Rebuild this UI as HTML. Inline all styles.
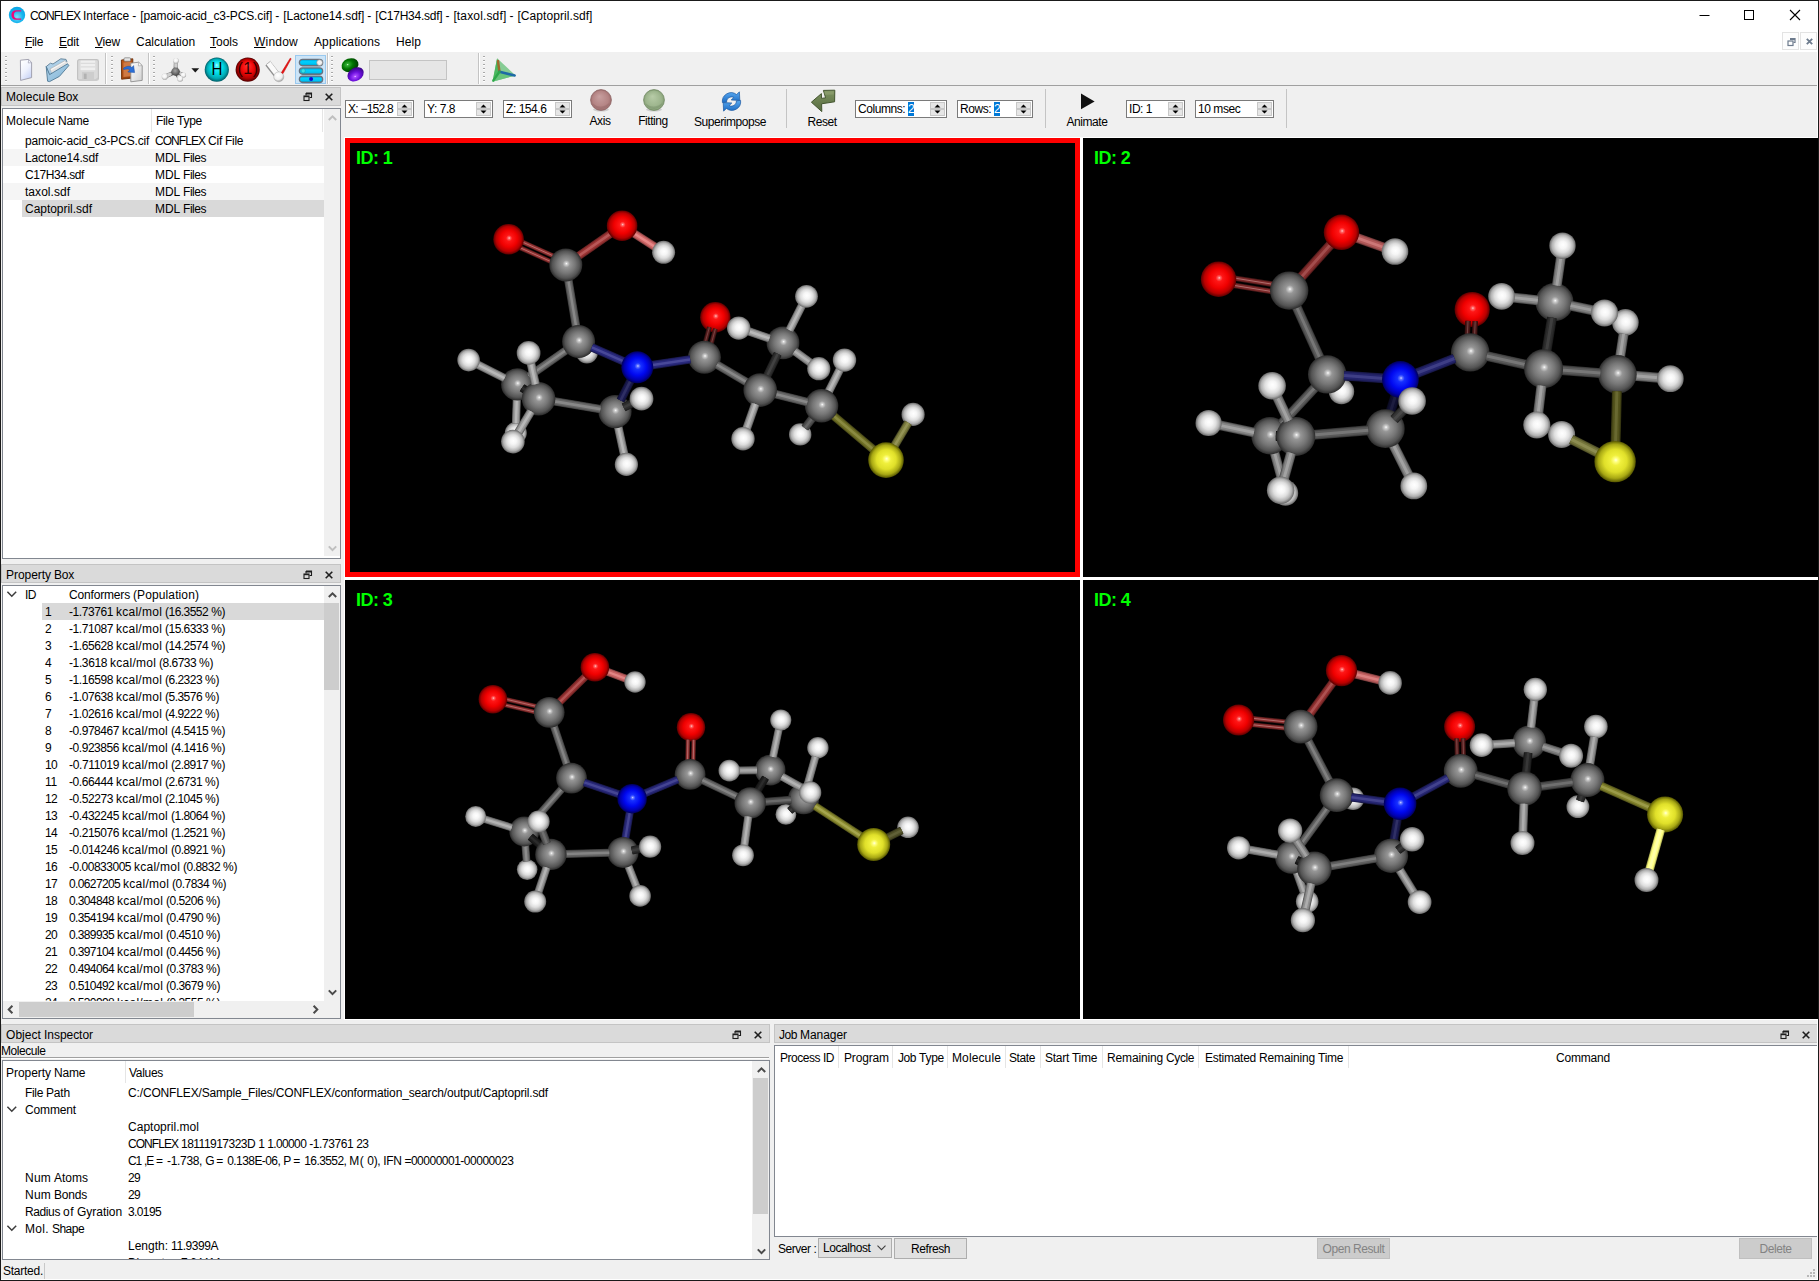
<!DOCTYPE html><html><head><meta charset="utf-8"><title>CONFLEX Interface</title><style>html,body{margin:0;padding:0;}
body{width:1819px;height:1281px;overflow:hidden;background:#000;font-family:"Liberation Sans",sans-serif;font-size:12px;color:#000;}
#win{position:absolute;left:0;top:0;width:1819px;height:1281px;background:#f0f0f0;overflow:hidden;}
i{position:absolute;display:block;}
.t{position:absolute;white-space:nowrap;font-size:12px;line-height:14px;color:#000;}
.g{position:absolute;white-space:nowrap;font-size:12px;line-height:14px;color:#000;letter-spacing:-0.45px;}
.c{text-align:center;}
#title{position:absolute;left:1px;top:1px;width:1817px;height:30px;background:#fff;}
#title .t{font-size:12px;}
#menu{position:absolute;left:1px;top:31px;width:1817px;height:21px;background:#fff;}
.mi{top:35px;}
.mi u{text-decoration:underline;text-underline-offset:1px;}
#tb{position:absolute;left:1px;top:52px;width:1817px;height:33px;background:#f0f0f0;border-bottom:1px solid #a0a0a0;}
.grip{top:56px;width:2px;height:27px;background:repeating-linear-gradient(to bottom,#a8a8a8 0,#a8a8a8 1px,#ffffff 1px,#ffffff 2px,transparent 2px,transparent 4px);}
.tsep{top:53px;width:1px;height:31px;background:#c4c4c4;border-right:1px solid #fff;}
.dtitle{position:absolute;background:#dadada;border:1px solid #c4c4c4;box-sizing:border-box;}
.tree{position:absolute;background:#fff;border:1px solid #828790;overflow:hidden;}
.hdr{position:absolute;background:#fff;}
.hsep{top:0;width:1px;height:23px;background:#e5e5e5;}
.alt{background:#f5f5f5;}
.sel{background:#d9d9d9;}
.vsb,.hsb{position:absolute;background:#f0f0f0;}
.thumb{background:#cdcdcd;}
.spin{position:absolute;background:#fff;border:1px solid #7a7a7a;box-sizing:border-box;}
.hl{background:#0078d7;color:#fff;font-weight:normal;}
.vsep{width:1px;background:#c4c4c4;}
.hline{height:1px;background:#a0a0a0;border-bottom:1px solid #fff;}
.mdiline{width:2px;background:#828790;}
#mdi{position:absolute;left:344px;top:137px;width:1475px;height:883px;background:#fff;}
.vp{position:absolute;background:#000;overflow:hidden;}
.vp svg{position:absolute;left:0;top:0;}
.vid{position:absolute;color:#00ff00;font-weight:bold;font-size:18px;line-height:18px;white-space:nowrap;letter-spacing:-0.55px;}
.combo{position:absolute;background:#e1e1e1;border:1px solid #adadad;box-sizing:border-box;}
.btn{position:absolute;background:#e1e1e1;border:1px solid #adadad;box-sizing:border-box;}
.btn.dis{background:#cccccc;border-color:#bfbfbf;}
.btn.dis .g{color:#838383;}
svg.ic{position:absolute;overflow:visible;}
.wb{background:#1a1a1a;}
</style></head><body><div id="win"><div id="title"></div><svg class="ic" style="left:8px;top:6px" width="18" height="18" viewBox="0 0 18 18"><defs><radialGradient id="lg" cx="0.5" cy="0.62" r="0.6"><stop offset="0" stop-color="#7fdcf7"/><stop offset="0.6" stop-color="#16b4ee"/><stop offset="1" stop-color="#0aa4e4"/></radialGradient></defs><circle cx="9" cy="9" r="8.2" fill="url(#lg)"/><path d="M13.2 4.2 H8.2 C5.2 4.2 3.4 6.2 3.4 9 C3.4 11.8 5.2 13.8 8.2 13.8 H13.2 V12.6 H9 C7 12.6 5.9 11.2 5.9 9 C5.9 6.8 7 5.4 9 5.4 H13.2 Z" fill="#f0067a"/></svg><span class="t" style="left:30px;top:9px"><span style="letter-spacing:-0.95px">CONFLEX</span><span style="letter-spacing:-0.33px"> </span><span style="letter-spacing:-0.07px">Interface</span><span style="letter-spacing:-0.33px"> </span><span style="letter-spacing:1.00px">-</span><span style="letter-spacing:-0.33px"> </span><span style="letter-spacing:-0.11px">[pamoic-acid_c3-PCS.cif]</span><span style="letter-spacing:-0.33px"> </span><span style="letter-spacing:1.00px">-</span><span style="letter-spacing:-0.33px"> </span><span style="letter-spacing:-0.07px">[Lactone14.sdf]</span><span style="letter-spacing:-0.33px"> </span><span style="letter-spacing:1.00px">-</span><span style="letter-spacing:-0.33px"> </span><span style="letter-spacing:-0.25px">[C17H34.sdf]</span><span style="letter-spacing:-0.33px"> </span><span style="letter-spacing:1.00px">-</span><span style="letter-spacing:-0.33px"> </span><span style="letter-spacing:0.15px">[taxol.sdf]</span><span style="letter-spacing:-0.33px"> </span><span style="letter-spacing:1.00px">-</span><span style="letter-spacing:-0.33px"> </span><span style="letter-spacing:0.07px">[Captopril.sdf]</span></span><svg class="ic" style="left:1690px;top:5px" width="120" height="22" viewBox="0 0 120 22"><path d="M9.5 10.5 H19.5" stroke="#000" stroke-width="1" fill="none"/><rect x="54.5" y="5.5" width="9" height="9" stroke="#000" stroke-width="1" fill="none"/><path d="M100 5 L110 15 M110 5 L100 15" stroke="#000" stroke-width="1.1" fill="none"/></svg><div id="menu"></div><span class="t mi" style="left:25px;letter-spacing:-0.34px"><u>F</u>ile</span><span class="t mi" style="left:59px;letter-spacing:-0.17px"><u>E</u>dit</span><span class="t mi" style="left:95px;letter-spacing:-0.20px"><u>V</u>iew</span><span class="t mi" style="left:136px;letter-spacing:-0.03px"><u></u>Calculation</span><span class="t mi" style="left:210px;letter-spacing:-0.00px"><u>T</u>ools</span><span class="t mi" style="left:254px;letter-spacing:0.22px"><u>W</u>indow</span><span class="t mi" style="left:314px;letter-spacing:0.11px"><u></u>Applications</span><span class="t mi" style="left:396px;letter-spacing:0.08px"><u></u>Help</span><i style="left:1782px;top:32px;width:17px;height:18px;border:1px solid #e3e3e3;box-sizing:border-box;background:#fdfdfd"></i><i style="left:1800px;top:32px;width:17px;height:18px;border:1px solid #e3e3e3;box-sizing:border-box;background:#fdfdfd"></i><svg class="ic" style="left:1786.5px;top:37px" width="10" height="10" viewBox="0 0 10 10"><path d="M3 1.5 H8 V5.5 H6.5 M3 2.5 H8" stroke="#6d7b8d" stroke-width="1.2" fill="none"/><rect x="1" y="4" width="5" height="4.5" stroke="#6d7b8d" stroke-width="1.2" fill="none"/></svg><svg class="ic" style="left:1805.5px;top:37.5px" width="8" height="8" viewBox="0 0 8 8"><path d="M0.8 0.8 L6.2 6.2 M6.2 0.8 L0.8 6.2" stroke="#6d7b8d" stroke-width="1.8" fill="none"/></svg><div id="tb"></div><i class="grip" style="left:5px"></i><i class="grip" style="left:111px"></i><i class="grip" style="left:153px"></i><i class="grip" style="left:331px"></i><i class="grip" style="left:483px"></i><i class="tsep" style="left:105px"></i><i class="tsep" style="left:148px"></i><i class="tsep" style="left:327px"></i><i class="tsep" style="left:478px"></i><svg class="ic" style="left:19px;top:58px" width="15" height="24" viewBox="0 0 15 24"><defs><linearGradient id="gnew" x1="0.2" y1="0" x2="0.8" y2="1"><stop offset="0" stop-color="#ffffff"/><stop offset="0.5" stop-color="#eef1fd"/><stop offset="1" stop-color="#c4d0f6"/></linearGradient></defs><path d="M1.4 2.2 L9.6 1.4 L12.6 4.6 L12.6 19.6 L1.6 22.4 Z" fill="url(#gnew)" stroke="#9a9aa8" stroke-width="0.9" stroke-linejoin="round"/><path d="M9.6 1.4 L9.3 5 L12.6 4.6 Z" fill="#f4f6ff" stroke="#a4a4b4" stroke-width="0.7" stroke-linejoin="round"/></svg><svg class="ic" style="left:45px;top:57px" width="25" height="26" viewBox="0 0 25 26"><defs><linearGradient id="gop" x1="0" y1="0" x2="1" y2="1"><stop offset="0" stop-color="#b4d6ec"/><stop offset="1" stop-color="#7fb2d4"/></linearGradient><linearGradient id="gop2" x1="0" y1="0" x2="1" y2="1"><stop offset="0" stop-color="#bcd9ee"/><stop offset="1" stop-color="#94bfdc"/></linearGradient></defs><path d="M1.2 9.6 L5.4 6.2 L8 7 L15.8 1.8 L21 2.4 L22 5 L4.4 18.4 Z" fill="url(#gop2)" stroke="#5f7f96" stroke-width="0.9" stroke-linejoin="round"/><path d="M5 12 L20 3.6 L22.4 6.4 L7.6 17.2 Z" fill="#f6f6f6" stroke="#a8a8a8" stroke-width="0.6" stroke-linejoin="round"/><path d="M6 13.4 L21.2 4.8 L22.8 6.8 L8 17.6 Z" fill="#e2e2e2"/><path d="M2.6 24.2 L1.2 9.6 L4.6 17.6 L22.6 6.8 L23.8 8.6 L14.4 19.4 L4.6 24.6 Z" fill="url(#gop)" stroke="#4f7894" stroke-width="0.9" stroke-linejoin="round"/></svg><svg class="ic" style="left:77px;top:59px" width="22" height="22" viewBox="0 0 22 22"><rect x="0.6" y="0.6" width="20.8" height="20.6" rx="1.8" fill="#dadada" stroke="#c2c2c2" stroke-width="1.2"/><rect x="3.6" y="1.6" width="14.6" height="9.6" fill="#efefef"/><path d="M3.6 4.4 H18.2 M3.6 7.8 H18.2" stroke="#dcdcdc" stroke-width="1.2"/><rect x="5" y="13" width="12" height="8" fill="#cdcdcd"/><rect x="6.8" y="14.6" width="2.8" height="5.4" fill="#b2b2b2"/><path d="M19 20.6 L21 18.6" stroke="#c2c2c2" stroke-width="1"/></svg><svg class="ic" style="left:120px;top:57px" width="24" height="26" viewBox="0 0 24 26"><defs><linearGradient id="gpa" x1="0" y1="0" x2="1" y2="1"><stop offset="0" stop-color="#c25a18"/><stop offset="1" stop-color="#8a3a0c"/></linearGradient><linearGradient id="gpb" x1="0" y1="0" x2="1" y2="1"><stop offset="0" stop-color="#ffffff"/><stop offset="1" stop-color="#d0d0d0"/></linearGradient></defs><path d="M1.4 3 L12.8 1.8 L13 21 L1.6 22.2 Z" fill="url(#gpa)" stroke="#6e3008" stroke-width="0.9" stroke-linejoin="round"/><path d="M3.4 5.6 L11.4 4.8 L11.4 19.2 L3.4 20 Z" fill="#cf7a44"/><rect x="4" y="0.8" width="6.6" height="3.4" rx="1" fill="#e4e4e4" stroke="#7a7a7a" stroke-width="0.7"/><path d="M10.8 6.2 L18.6 5.2 L22.2 8.6 L22.2 23.4 L10.8 24.8 Z" fill="url(#gpb)" stroke="#8e8e8e" stroke-width="0.9" stroke-linejoin="round"/><path d="M18.6 5.2 L18.4 8.9 L22.2 8.6 Z" fill="#fafafa" stroke="#9a9a9a" stroke-width="0.6" stroke-linejoin="round"/><path d="M3.6 11 C7.4 8.6 10.6 9 11.8 10.6 L13.6 8.6 L14.6 15.6 L7.8 15 L9.8 13 C8.8 11.8 6.8 11.6 3.6 12.6 Z" fill="#2b6fd6" stroke="#1a4ea6" stroke-width="0.5" stroke-linejoin="round"/></svg><svg class="ic" style="left:160px;top:56px" width="28" height="28" viewBox="0 0 28 28"><defs><radialGradient id="gmh" cx="0.45" cy="0.4" r="0.6"><stop offset="0" stop-color="#ffffff"/><stop offset="0.55" stop-color="#f0f0f0"/><stop offset="1" stop-color="#a4a4a4"/></radialGradient><radialGradient id="gmc" cx="0.45" cy="0.4" r="0.65"><stop offset="0" stop-color="#a4a4a4"/><stop offset="0.6" stop-color="#6a6a6a"/><stop offset="1" stop-color="#3a3a3a"/></radialGradient></defs><g stroke-linecap="round" fill="none"><path d="M15.6 15.8 L16 5" stroke="#6e6e6e" stroke-width="4.2"/><path d="M15.9 10.6 L16 5" stroke="#cfcfcf" stroke-width="3.4"/><path d="M15.6 15.8 L5 20.6" stroke="#6e6e6e" stroke-width="4.2"/><path d="M10 18.3 L5 20.6" stroke="#cfcfcf" stroke-width="3.4"/><path d="M15.6 15.8 L23.4 19" stroke="#6e6e6e" stroke-width="4"/><path d="M20.2 17.7 L23.4 19" stroke="#cfcfcf" stroke-width="3.2"/><path d="M15.6 15.8 L20 22.6" stroke="#606060" stroke-width="4.2"/><path d="M18.6 20.4 L20 22.6" stroke="#cfcfcf" stroke-width="3.4"/></g><circle cx="16" cy="4.8" r="2.8" fill="url(#gmh)"/><circle cx="4.8" cy="20.7" r="3.1" fill="url(#gmh)"/><circle cx="23.4" cy="19.1" r="2.7" fill="url(#gmh)"/><circle cx="15.6" cy="15.6" r="4.2" fill="url(#gmc)"/><circle cx="20.1" cy="22.8" r="3" fill="url(#gmh)"/></svg><svg class="ic" style="left:191px;top:68px" width="9" height="5" viewBox="0 0 9 5"><path d="M0.4 0.2 H8.2 L4.3 4.4 Z" fill="#1a1a1a"/></svg><svg class="ic" style="left:204px;top:57px" width="26" height="26" viewBox="0 0 26 26"><defs><radialGradient id="gh" cx="0.5" cy="0.5" r="0.5" fx="0.5" fy="0.3"><stop offset="0" stop-color="#b8ffff"/><stop offset="0.12" stop-color="#40f4fc"/><stop offset="0.5" stop-color="#00dce6"/><stop offset="0.8" stop-color="#00aab4"/><stop offset="1" stop-color="#005c66"/></radialGradient></defs><circle cx="12.8" cy="12.7" r="12.1" fill="url(#gh)"/><text x="15" y="18.2" text-anchor="middle" font-family="Liberation Sans,sans-serif" font-size="17.6" transform="scale(0.86,1)" fill="#000">H</text></svg><svg class="ic" style="left:235px;top:57px" width="26" height="26" viewBox="0 0 26 26"><defs><radialGradient id="g1" cx="0.5" cy="0.5" r="0.5" fx="0.5" fy="0.3"><stop offset="0" stop-color="#ff9090"/><stop offset="0.12" stop-color="#ff2a2a"/><stop offset="0.5" stop-color="#f00808"/><stop offset="0.8" stop-color="#b00000"/><stop offset="1" stop-color="#500000"/></radialGradient></defs><circle cx="12.7" cy="12.7" r="12.1" fill="url(#g1)"/><text x="13" y="17.4" text-anchor="middle" font-family="Liberation Sans,sans-serif" font-size="16" letter-spacing="0.4" fill="#300000">(1)</text></svg><svg class="ic" style="left:264px;top:56px" width="30" height="28" viewBox="0 0 30 28"><defs><linearGradient id="gck" x1="0" y1="0" x2="0.6" y2="1"><stop offset="0" stop-color="#ffffff"/><stop offset="0.65" stop-color="#f4f4f4"/><stop offset="1" stop-color="#9c9c9c"/></linearGradient><radialGradient id="gckb" cx="0.42" cy="0.35" r="0.7"><stop offset="0" stop-color="#ffffff"/><stop offset="0.6" stop-color="#f0f0f0"/><stop offset="1" stop-color="#8c8c8c"/></radialGradient></defs><path d="M4 7.4 L13.4 19.6" stroke="#8e8e8e" stroke-width="6.6" stroke-linecap="butt" fill="none"/><path d="M4.4 7 L13.8 19.2" stroke="#fafafa" stroke-width="5" stroke-linecap="butt" fill="none"/><path d="M2.2 8.6 L6.4 5.2" stroke="#b4b4b4" stroke-width="1" fill="none"/><circle cx="14.8" cy="20.8" r="5" fill="url(#gckb)" stroke="#a8a8a8" stroke-width="0.5"/><path d="M17.4 16.6 L26.2 2.2 L27.2 2.8 L19 17.6 Z" fill="#e81414" stroke="#c00000" stroke-width="0.5" stroke-linejoin="round"/></svg><i style="left:295px;top:55px;width:31px;height:29px;background:#cce4f7;border:1px solid #99c9ef;box-sizing:border-box"></i><svg class="ic" style="left:298px;top:58px" width="26" height="26" viewBox="0 0 26 26"><defs><linearGradient id="gly" x1="0" y1="0" x2="0" y2="1"><stop offset="0" stop-color="#0098d0"/><stop offset="0.35" stop-color="#00d0ff"/><stop offset="0.7" stop-color="#00c4f4"/><stop offset="1" stop-color="#0090c4"/></linearGradient></defs><rect x="1.4" y="1.4" width="23.2" height="6.4" rx="3.2" fill="url(#gly)" stroke="#68727e" stroke-width="1.4"/><rect x="1.4" y="9.9" width="23.2" height="6.4" rx="3.2" fill="url(#gly)" stroke="#68727e" stroke-width="1.4"/><rect x="1.4" y="18.1" width="23.2" height="6.4" rx="3.2" fill="url(#gly)" stroke="#68727e" stroke-width="1.4"/><circle cx="21.6" cy="4.6" r="2.9" fill="#f2f2f2" stroke="#909090" stroke-width="0.7"/><circle cx="5.2" cy="12.9" r="2.1" fill="#38e0e8" stroke="#1a98a0" stroke-width="0.5"/><circle cx="13.1" cy="21.1" r="2" fill="#0c0cd8"/></svg><svg class="ic" style="left:339px;top:56px" width="28" height="28" viewBox="0 0 28 28"><defs><radialGradient id="gog" cx="0.38" cy="0.4" r="0.7"><stop offset="0" stop-color="#d8ffd8"/><stop offset="0.1" stop-color="#30b030"/><stop offset="0.45" stop-color="#007400"/><stop offset="1" stop-color="#003000"/></radialGradient><radialGradient id="gov" cx="0.42" cy="0.62" r="0.7"><stop offset="0" stop-color="#f0d8ff"/><stop offset="0.1" stop-color="#a848ff"/><stop offset="0.45" stop-color="#6c10dc"/><stop offset="1" stop-color="#2c0070"/></radialGradient></defs><ellipse cx="11" cy="9.2" rx="8.7" ry="6.8" transform="rotate(-20 11 9.2)" fill="url(#gog)"/><ellipse cx="16.6" cy="18.4" rx="8.7" ry="6.5" transform="rotate(-30 16.6 18.4)" fill="url(#gov)"/></svg><i style="left:369px;top:60px;width:78px;height:20px;background:#e6e6e6;border:1px solid #c4c4c4;box-sizing:border-box"></i><svg class="ic" style="left:490px;top:56px" width="28" height="28" viewBox="0 0 28 28"><path d="M7.1 2.3 L25.6 19.5 L2.5 25.7 Z" fill="#86cc94"/><path d="M7.1 2.3 L9.5 15.8 L2.5 25.7 Z" fill="#4cb860"/><path d="M9.5 15.8 L25.6 19.5 L2.5 25.7 Z" fill="#68c47c"/><path d="M8 5 L9.5 15.8" stroke="#a06a2c" stroke-width="2.4" fill="none" stroke-linecap="round"/><path d="M9.5 15.8 L24.6 19.4" stroke="#1e6aa6" stroke-width="2.6" fill="none" stroke-linecap="round"/><path d="M9.5 15.8 L3.4 24.4" stroke="#2fa84a" stroke-width="2.4" fill="none" stroke-linecap="round"/></svg><div class="dtitle" style="left:1px;top:87px;width:340px;height:19px"><span class="t" style="left:4px;top:2px"><span style="letter-spacing:0.12px">Molecule</span><span style="letter-spacing:-0.33px"> </span><span style="letter-spacing:-0.22px">Box</span></span><svg class="ic" style="right:27px;top:4px" width="10" height="10" viewBox="0 0 10 10"><path d="M3 1 H8.5 V5.5 H6.5 M3 2 H8.5 M3 1 V3.5" stroke="#1e1e1e" stroke-width="1.1" fill="none"/><rect x="1" y="4" width="5" height="4.5" stroke="#1e1e1e" stroke-width="1.1" fill="none"/><path d="M1 4.6 H6" stroke="#1e1e1e" stroke-width="1.2"/></svg><svg class="ic" style="right:7px;top:5px" width="8" height="8" viewBox="0 0 8 8"><path d="M0.7 0.7 L7.3 7.3 M7.3 0.7 L0.7 7.3" stroke="#1e1e1e" stroke-width="1.6" fill="none"/></svg></div><div class="tree" style="left:2px;top:108px;width:337px;height:449px"><div class="hdr" style="left:0;top:0;width:320px;height:23px"><span class="t" style="left:3px;top:5px"><span style="letter-spacing:0.12px">Molecule</span><span style="letter-spacing:-0.33px"> </span><span style="letter-spacing:-0.25px">Name</span></span><i class="hsep" style="left:148px"></i><span class="t" style="left:153px;top:5px"><span style="letter-spacing:-0.34px">File</span><span style="letter-spacing:-0.33px"> </span><span style="letter-spacing:-0.25px">Type</span></span><i class="hsep" style="left:319px"></i></div><span class="t" style="left:22px;top:25px"><span style="letter-spacing:-0.18px">pamoic-acid_c3-PCS.cif</span></span><span class="t" style="left:152px;top:25px"><span style="letter-spacing:-0.95px">CONFLEX</span><span style="letter-spacing:-0.33px"> </span><span style="letter-spacing:-0.22px">Cif</span><span style="letter-spacing:-0.33px"> </span><span style="letter-spacing:-0.34px">File</span></span><i class="alt" style="left:0;top:40px;width:321px;height:17px"></i><span class="t" style="left:22px;top:42px"><span style="letter-spacing:-0.18px">Lactone14.sdf</span></span><span class="t" style="left:152px;top:42px"><span style="letter-spacing:-0.11px">MDL</span><span style="letter-spacing:-0.33px"> </span><span style="letter-spacing:-0.47px">Files</span></span><span class="t" style="left:22px;top:59px"><span style="letter-spacing:-0.44px">C17H34.sdf</span></span><span class="t" style="left:152px;top:59px"><span style="letter-spacing:-0.11px">MDL</span><span style="letter-spacing:-0.33px"> </span><span style="letter-spacing:-0.47px">Files</span></span><i class="alt" style="left:0;top:74px;width:321px;height:17px"></i><span class="t" style="left:22px;top:76px"><span style="letter-spacing:0.04px">taxol.sdf</span></span><span class="t" style="left:152px;top:76px"><span style="letter-spacing:-0.11px">MDL</span><span style="letter-spacing:-0.33px"> </span><span style="letter-spacing:-0.47px">Files</span></span><i class="sel" style="left:19px;top:91px;width:302px;height:17px"></i><span class="t" style="left:22px;top:93px"><span style="letter-spacing:-0.03px">Captopril.sdf</span></span><span class="t" style="left:152px;top:93px"><span style="letter-spacing:-0.11px">MDL</span><span style="letter-spacing:-0.33px"> </span><span style="letter-spacing:-0.47px">Files</span></span><div class="vsb" style="left:321px;top:0;width:16px;height:447px"><svg class="ic" style="right:-0.5px;top:0" width="17" height="17" viewBox="0 0 17 17"><path d="M4.8 11 L8.5 7.3 L12.2 11" stroke="#bfbfbf" stroke-width="2" fill="none"/></svg><svg class="ic" style="right:-0.5px;bottom:0" width="17" height="17" viewBox="0 0 17 17"><path d="M4.8 7.4 L8.5 11.1 L12.2 7.4" stroke="#bfbfbf" stroke-width="2" fill="none"/></svg></div></div><div class="dtitle" style="left:1px;top:564px;width:340px;height:19px"><span class="t" style="left:4px;top:3px"><span style="letter-spacing:-0.04px">Property</span><span style="letter-spacing:-0.33px"> </span><span style="letter-spacing:-0.22px">Box</span></span><svg class="ic" style="right:27px;top:5px" width="10" height="10" viewBox="0 0 10 10"><path d="M3 1 H8.5 V5.5 H6.5 M3 2 H8.5 M3 1 V3.5" stroke="#1e1e1e" stroke-width="1.1" fill="none"/><rect x="1" y="4" width="5" height="4.5" stroke="#1e1e1e" stroke-width="1.1" fill="none"/><path d="M1 4.6 H6" stroke="#1e1e1e" stroke-width="1.2"/></svg><svg class="ic" style="right:7px;top:6px" width="8" height="8" viewBox="0 0 8 8"><path d="M0.7 0.7 L7.3 7.3 M7.3 0.7 L0.7 7.3" stroke="#1e1e1e" stroke-width="1.6" fill="none"/></svg></div><div class="tree" style="left:2px;top:585px;width:337px;height:432px"><svg class="ic" style="left:4px;top:5px" width="10" height="7" viewBox="0 0 10 7"><path d="M0.4 0.8 L4.8 5.2 L9.2 0.8" stroke="#3c3c3c" stroke-width="1.5" fill="none"/></svg><span class="t" style="left:22px;top:2px"><span style="letter-spacing:-0.50px">ID</span></span><span class="t" style="left:66px;top:2px"><span style="letter-spacing:-0.17px">Conformers</span><span style="letter-spacing:-0.33px"> </span><span style="letter-spacing:0.11px">(Population)</span></span><div style="position:absolute;left:0;top:0;width:321px;height:415px;overflow:hidden"><i class="sel" style="left:39px;top:17px;width:282px;height:17px"></i><span class="t" style="left:42px;top:19px"><span style="letter-spacing:-0.67px">1</span></span><span class="t" style="left:66px;top:19px"><span style="letter-spacing:-0.42px">-1.73761</span><span style="letter-spacing:-0.33px"> </span><span style="letter-spacing:0.25px">kcal/mol</span><span style="letter-spacing:-0.33px"> </span><span style="letter-spacing:-0.54px">(16.3552</span><span style="letter-spacing:-0.33px"> </span><span style="letter-spacing:-0.34px">%)</span></span><span class="t" style="left:42px;top:36px"><span style="letter-spacing:-0.67px">2</span></span><span class="t" style="left:66px;top:36px"><span style="letter-spacing:-0.42px">-1.71087</span><span style="letter-spacing:-0.33px"> </span><span style="letter-spacing:0.25px">kcal/mol</span><span style="letter-spacing:-0.33px"> </span><span style="letter-spacing:-0.54px">(15.6333</span><span style="letter-spacing:-0.33px"> </span><span style="letter-spacing:-0.34px">%)</span></span><span class="t" style="left:42px;top:53px"><span style="letter-spacing:-0.67px">3</span></span><span class="t" style="left:66px;top:53px"><span style="letter-spacing:-0.42px">-1.65628</span><span style="letter-spacing:-0.33px"> </span><span style="letter-spacing:0.25px">kcal/mol</span><span style="letter-spacing:-0.33px"> </span><span style="letter-spacing:-0.54px">(14.2574</span><span style="letter-spacing:-0.33px"> </span><span style="letter-spacing:-0.34px">%)</span></span><span class="t" style="left:42px;top:70px"><span style="letter-spacing:-0.67px">4</span></span><span class="t" style="left:66px;top:70px"><span style="letter-spacing:-0.38px">-1.3618</span><span style="letter-spacing:-0.33px"> </span><span style="letter-spacing:0.25px">kcal/mol</span><span style="letter-spacing:-0.33px"> </span><span style="letter-spacing:-0.53px">(8.6733</span><span style="letter-spacing:-0.33px"> </span><span style="letter-spacing:-0.34px">%)</span></span><span class="t" style="left:42px;top:87px"><span style="letter-spacing:-0.67px">5</span></span><span class="t" style="left:66px;top:87px"><span style="letter-spacing:-0.42px">-1.16598</span><span style="letter-spacing:-0.33px"> </span><span style="letter-spacing:0.25px">kcal/mol</span><span style="letter-spacing:-0.33px"> </span><span style="letter-spacing:-0.53px">(6.2323</span><span style="letter-spacing:-0.33px"> </span><span style="letter-spacing:-0.34px">%)</span></span><span class="t" style="left:42px;top:104px"><span style="letter-spacing:-0.67px">6</span></span><span class="t" style="left:66px;top:104px"><span style="letter-spacing:-0.42px">-1.07638</span><span style="letter-spacing:-0.33px"> </span><span style="letter-spacing:0.25px">kcal/mol</span><span style="letter-spacing:-0.33px"> </span><span style="letter-spacing:-0.53px">(5.3576</span><span style="letter-spacing:-0.33px"> </span><span style="letter-spacing:-0.34px">%)</span></span><span class="t" style="left:42px;top:121px"><span style="letter-spacing:-0.67px">7</span></span><span class="t" style="left:66px;top:121px"><span style="letter-spacing:-0.42px">-1.02616</span><span style="letter-spacing:-0.33px"> </span><span style="letter-spacing:0.25px">kcal/mol</span><span style="letter-spacing:-0.33px"> </span><span style="letter-spacing:-0.53px">(4.9222</span><span style="letter-spacing:-0.33px"> </span><span style="letter-spacing:-0.34px">%)</span></span><span class="t" style="left:42px;top:138px"><span style="letter-spacing:-0.67px">8</span></span><span class="t" style="left:66px;top:138px"><span style="letter-spacing:-0.45px">-0.978467</span><span style="letter-spacing:-0.33px"> </span><span style="letter-spacing:0.25px">kcal/mol</span><span style="letter-spacing:-0.33px"> </span><span style="letter-spacing:-0.53px">(4.5415</span><span style="letter-spacing:-0.33px"> </span><span style="letter-spacing:-0.34px">%)</span></span><span class="t" style="left:42px;top:155px"><span style="letter-spacing:-0.67px">9</span></span><span class="t" style="left:66px;top:155px"><span style="letter-spacing:-0.45px">-0.923856</span><span style="letter-spacing:-0.33px"> </span><span style="letter-spacing:0.25px">kcal/mol</span><span style="letter-spacing:-0.33px"> </span><span style="letter-spacing:-0.53px">(4.1416</span><span style="letter-spacing:-0.33px"> </span><span style="letter-spacing:-0.34px">%)</span></span><span class="t" style="left:42px;top:172px"><span style="letter-spacing:-0.67px">10</span></span><span class="t" style="left:66px;top:172px"><span style="letter-spacing:-0.35px">-0.711019</span><span style="letter-spacing:-0.33px"> </span><span style="letter-spacing:0.25px">kcal/mol</span><span style="letter-spacing:-0.33px"> </span><span style="letter-spacing:-0.53px">(2.8917</span><span style="letter-spacing:-0.33px"> </span><span style="letter-spacing:-0.34px">%)</span></span><span class="t" style="left:42px;top:189px"><span style="letter-spacing:-0.23px">11</span></span><span class="t" style="left:66px;top:189px"><span style="letter-spacing:-0.42px">-0.66444</span><span style="letter-spacing:-0.33px"> </span><span style="letter-spacing:0.25px">kcal/mol</span><span style="letter-spacing:-0.33px"> </span><span style="letter-spacing:-0.53px">(2.6731</span><span style="letter-spacing:-0.33px"> </span><span style="letter-spacing:-0.34px">%)</span></span><span class="t" style="left:42px;top:206px"><span style="letter-spacing:-0.67px">12</span></span><span class="t" style="left:66px;top:206px"><span style="letter-spacing:-0.42px">-0.52273</span><span style="letter-spacing:-0.33px"> </span><span style="letter-spacing:0.25px">kcal/mol</span><span style="letter-spacing:-0.33px"> </span><span style="letter-spacing:-0.53px">(2.1045</span><span style="letter-spacing:-0.33px"> </span><span style="letter-spacing:-0.34px">%)</span></span><span class="t" style="left:42px;top:223px"><span style="letter-spacing:-0.67px">13</span></span><span class="t" style="left:66px;top:223px"><span style="letter-spacing:-0.45px">-0.432245</span><span style="letter-spacing:-0.33px"> </span><span style="letter-spacing:0.25px">kcal/mol</span><span style="letter-spacing:-0.33px"> </span><span style="letter-spacing:-0.53px">(1.8064</span><span style="letter-spacing:-0.33px"> </span><span style="letter-spacing:-0.34px">%)</span></span><span class="t" style="left:42px;top:240px"><span style="letter-spacing:-0.67px">14</span></span><span class="t" style="left:66px;top:240px"><span style="letter-spacing:-0.45px">-0.215076</span><span style="letter-spacing:-0.33px"> </span><span style="letter-spacing:0.25px">kcal/mol</span><span style="letter-spacing:-0.33px"> </span><span style="letter-spacing:-0.53px">(1.2521</span><span style="letter-spacing:-0.33px"> </span><span style="letter-spacing:-0.34px">%)</span></span><span class="t" style="left:42px;top:257px"><span style="letter-spacing:-0.67px">15</span></span><span class="t" style="left:66px;top:257px"><span style="letter-spacing:-0.45px">-0.014246</span><span style="letter-spacing:-0.33px"> </span><span style="letter-spacing:0.25px">kcal/mol</span><span style="letter-spacing:-0.33px"> </span><span style="letter-spacing:-0.53px">(0.8921</span><span style="letter-spacing:-0.33px"> </span><span style="letter-spacing:-0.34px">%)</span></span><span class="t" style="left:42px;top:274px"><span style="letter-spacing:-0.67px">16</span></span><span class="t" style="left:66px;top:274px"><span style="letter-spacing:-0.49px">-0.00833005</span><span style="letter-spacing:-0.33px"> </span><span style="letter-spacing:0.25px">kcal/mol</span><span style="letter-spacing:-0.33px"> </span><span style="letter-spacing:-0.53px">(0.8832</span><span style="letter-spacing:-0.33px"> </span><span style="letter-spacing:-0.34px">%)</span></span><span class="t" style="left:42px;top:291px"><span style="letter-spacing:-0.67px">17</span></span><span class="t" style="left:66px;top:291px"><span style="letter-spacing:-0.63px">0.0627205</span><span style="letter-spacing:-0.33px"> </span><span style="letter-spacing:0.25px">kcal/mol</span><span style="letter-spacing:-0.33px"> </span><span style="letter-spacing:-0.53px">(0.7834</span><span style="letter-spacing:-0.33px"> </span><span style="letter-spacing:-0.34px">%)</span></span><span class="t" style="left:42px;top:308px"><span style="letter-spacing:-0.67px">18</span></span><span class="t" style="left:66px;top:308px"><span style="letter-spacing:-0.63px">0.304848</span><span style="letter-spacing:-0.33px"> </span><span style="letter-spacing:0.25px">kcal/mol</span><span style="letter-spacing:-0.33px"> </span><span style="letter-spacing:-0.53px">(0.5206</span><span style="letter-spacing:-0.33px"> </span><span style="letter-spacing:-0.34px">%)</span></span><span class="t" style="left:42px;top:325px"><span style="letter-spacing:-0.67px">19</span></span><span class="t" style="left:66px;top:325px"><span style="letter-spacing:-0.63px">0.354194</span><span style="letter-spacing:-0.33px"> </span><span style="letter-spacing:0.25px">kcal/mol</span><span style="letter-spacing:-0.33px"> </span><span style="letter-spacing:-0.53px">(0.4790</span><span style="letter-spacing:-0.33px"> </span><span style="letter-spacing:-0.34px">%)</span></span><span class="t" style="left:42px;top:342px"><span style="letter-spacing:-0.67px">20</span></span><span class="t" style="left:66px;top:342px"><span style="letter-spacing:-0.63px">0.389935</span><span style="letter-spacing:-0.33px"> </span><span style="letter-spacing:0.25px">kcal/mol</span><span style="letter-spacing:-0.33px"> </span><span style="letter-spacing:-0.53px">(0.4510</span><span style="letter-spacing:-0.33px"> </span><span style="letter-spacing:-0.34px">%)</span></span><span class="t" style="left:42px;top:359px"><span style="letter-spacing:-0.67px">21</span></span><span class="t" style="left:66px;top:359px"><span style="letter-spacing:-0.63px">0.397104</span><span style="letter-spacing:-0.33px"> </span><span style="letter-spacing:0.25px">kcal/mol</span><span style="letter-spacing:-0.33px"> </span><span style="letter-spacing:-0.53px">(0.4456</span><span style="letter-spacing:-0.33px"> </span><span style="letter-spacing:-0.34px">%)</span></span><span class="t" style="left:42px;top:376px"><span style="letter-spacing:-0.67px">22</span></span><span class="t" style="left:66px;top:376px"><span style="letter-spacing:-0.63px">0.494064</span><span style="letter-spacing:-0.33px"> </span><span style="letter-spacing:0.25px">kcal/mol</span><span style="letter-spacing:-0.33px"> </span><span style="letter-spacing:-0.53px">(0.3783</span><span style="letter-spacing:-0.33px"> </span><span style="letter-spacing:-0.34px">%)</span></span><span class="t" style="left:42px;top:393px"><span style="letter-spacing:-0.67px">23</span></span><span class="t" style="left:66px;top:393px"><span style="letter-spacing:-0.63px">0.510492</span><span style="letter-spacing:-0.33px"> </span><span style="letter-spacing:0.25px">kcal/mol</span><span style="letter-spacing:-0.33px"> </span><span style="letter-spacing:-0.53px">(0.3679</span><span style="letter-spacing:-0.33px"> </span><span style="letter-spacing:-0.34px">%)</span></span><span class="t" style="left:42px;top:410px"><span style="letter-spacing:-0.67px">24</span></span><span class="t" style="left:66px;top:410px"><span style="letter-spacing:-0.63px">0.530998</span><span style="letter-spacing:-0.33px"> </span><span style="letter-spacing:0.25px">kcal/mol</span><span style="letter-spacing:-0.33px"> </span><span style="letter-spacing:-0.53px">(0.3555</span><span style="letter-spacing:-0.33px"> </span><span style="letter-spacing:-0.34px">%)</span></span></div><div class="vsb" style="left:321px;top:0;width:16px;height:414px"><svg class="ic" style="right:-0.5px;top:0" width="17" height="17" viewBox="0 0 17 17"><path d="M4.8 11 L8.5 7.3 L12.2 11" stroke="#4a4a4a" stroke-width="2" fill="none"/></svg><svg class="ic" style="right:-0.5px;bottom:0" width="17" height="17" viewBox="0 0 17 17"><path d="M4.8 7.4 L8.5 11.1 L12.2 7.4" stroke="#4a4a4a" stroke-width="2" fill="none"/></svg><i class="thumb" style="left:0px;top:17px;width:15px;height:87px"></i></div><div class="hsb" style="left:0;top:415px;width:321px;height:17px"><svg class="ic" style="left:-0.5px;top:0" width="17" height="17" viewBox="0 0 17 17"><path d="M9.4 4.8 L5.7 8.5 L9.4 12.2" stroke="#4a4a4a" stroke-width="2" fill="none"/></svg><svg class="ic" style="right:1px;top:0" width="17" height="17" viewBox="0 0 17 17"><path d="M7.6 4.8 L11.3 8.5 L7.6 12.2" stroke="#4a4a4a" stroke-width="2" fill="none"/></svg><i class="thumb" style="left:16px;top:1px;width:175px;height:15px"></i></div><i style="left:321px;top:414px;width:16px;height:18px;background:#f0f0f0"></i></div><div class="spin" style="left:345px;top:100px;width:69px;height:18px"><span class="g" style="left:2px;top:1px;letter-spacing:-0.75px">X: −152.8</span><i style="right:1px;top:1px;width:15px;height:7px;background:#e6e6e6;border:1px solid #c8c8c8;box-sizing:border-box"></i><i style="right:1px;bottom:1px;width:15px;height:7px;background:#e6e6e6;border:1px solid #c8c8c8;box-sizing:border-box"></i><svg class="ic" style="right:5px;top:3px" width="7" height="10" viewBox="0 0 7 10"><path d="M0.5 3.5 L3.5 0.5 L6.5 3.5 Z M0.5 6.5 L3.5 9.5 L6.5 6.5 Z" fill="#000"/></svg></div><div class="spin" style="left:424px;top:100px;width:69px;height:18px"><span class="g" style="left:2px;top:1px">Y: 7.8</span><i style="right:1px;top:1px;width:15px;height:7px;background:#e6e6e6;border:1px solid #c8c8c8;box-sizing:border-box"></i><i style="right:1px;bottom:1px;width:15px;height:7px;background:#e6e6e6;border:1px solid #c8c8c8;box-sizing:border-box"></i><svg class="ic" style="right:5px;top:3px" width="7" height="10" viewBox="0 0 7 10"><path d="M0.5 3.5 L3.5 0.5 L6.5 3.5 Z M0.5 6.5 L3.5 9.5 L6.5 6.5 Z" fill="#000"/></svg></div><div class="spin" style="left:503px;top:100px;width:69px;height:18px"><span class="g" style="left:2px;top:1px">Z: 154.6</span><i style="right:1px;top:1px;width:15px;height:7px;background:#e6e6e6;border:1px solid #c8c8c8;box-sizing:border-box"></i><i style="right:1px;bottom:1px;width:15px;height:7px;background:#e6e6e6;border:1px solid #c8c8c8;box-sizing:border-box"></i><svg class="ic" style="right:5px;top:3px" width="7" height="10" viewBox="0 0 7 10"><path d="M0.5 3.5 L3.5 0.5 L6.5 3.5 Z M0.5 6.5 L3.5 9.5 L6.5 6.5 Z" fill="#000"/></svg></div><svg class="ic" style="left:588.7px;top:87.5px" width="24" height="26" viewBox="0 0 24 26"><defs><radialGradient id="gax" cx="0.5" cy="0.5" r="0.5" fx="0.42" fy="0.32"><stop offset="0" stop-color="#c8a0a0"/><stop offset="0.75" stop-color="#b48484"/><stop offset="1" stop-color="#a07070"/></radialGradient></defs><ellipse cx="12" cy="21.6" rx="8" ry="2" fill="#000" opacity="0.14"/><circle cx="12" cy="12" r="10.4" fill="url(#gax)" stroke="#8c6262" stroke-width="0.8"/><path d="M3.4 15.6 A9.4 9.4 0 0 0 20.8 14.6 A13 13 0 0 1 3.4 15.6Z" fill="#8c6262" opacity="0.35"/></svg><span class="g c" style="left:570px;width:60px;top:114px">Axis</span><svg class="ic" style="left:641.8px;top:87.5px" width="24" height="26" viewBox="0 0 24 26"><defs><radialGradient id="gfi" cx="0.5" cy="0.5" r="0.5" fx="0.42" fy="0.32"><stop offset="0" stop-color="#b8cca8"/><stop offset="0.75" stop-color="#9cb48c"/><stop offset="1" stop-color="#88a078"/></radialGradient></defs><ellipse cx="12" cy="21.6" rx="8" ry="2" fill="#000" opacity="0.14"/><circle cx="12" cy="12" r="10.4" fill="url(#gfi)" stroke="#6e8860" stroke-width="0.8"/><path d="M3.4 15.6 A9.4 9.4 0 0 0 20.8 14.6 A13 13 0 0 1 3.4 15.6Z" fill="#6e8860" opacity="0.35"/></svg><span class="g c" style="left:623px;width:60px;top:114px">Fitting</span><svg class="ic" style="left:720px;top:90px" width="23" height="23" viewBox="0 0 23 23"><defs><linearGradient id="gsu" x1="0" y1="0" x2="0" y2="1"><stop offset="0" stop-color="#58a8f0"/><stop offset="1" stop-color="#1c6cc4"/></linearGradient></defs><path d="M2.4 12.6 A8.8 8.8 0 0 1 16.6 4.6 L19.4 1.8 L19.8 10.4 L11.2 10 L13.8 7.4 A5 5 0 0 0 6.6 12.2 Z" fill="url(#gsu)" stroke="#1a58a0" stroke-width="0.7" stroke-linejoin="round"/><path d="M20.6 10.4 A8.8 8.8 0 0 1 6.4 18.4 L3.6 21.2 L3.2 12.6 L11.8 13 L9.2 15.6 A5 5 0 0 0 16.4 10.8 Z" fill="url(#gsu)" stroke="#1a58a0" stroke-width="0.7" stroke-linejoin="round"/></svg><span class="g c" style="left:680px;width:100px;top:115px">Superimpopse</span><i class="vsep" style="left:786px;top:89px;height:39px"></i><svg class="ic" style="left:810px;top:89px" width="27" height="25" viewBox="0 0 27 25"><defs><linearGradient id="grs" x1="0" y1="0" x2="0" y2="1"><stop offset="0" stop-color="#7e9460"/><stop offset="1" stop-color="#566a40"/></linearGradient></defs><path d="M13.4 1.4 L24.8 1.2 L24.6 12.8 L11.6 14.8 L11.8 22.6 L1.4 13.2 L11.4 4.6 L11.5 9.4 L15.6 8.8 Z" fill="url(#grs)" stroke="#43552f" stroke-width="1" stroke-linejoin="round"/><path d="M14.4 2.4 L23.8 2.2 L23.7 5.4 L14.8 5.8 Z" fill="#8ea070" opacity="0.7"/></svg><span class="g c" style="left:792px;width:60px;top:115px">Reset</span><div class="spin" style="left:855px;top:100px;width:92px;height:18px"><span class="g" style="left:2px;top:1px">Columns: <b class="hl">2</b></span><i style="right:1px;top:1px;width:15px;height:7px;background:#e6e6e6;border:1px solid #c8c8c8;box-sizing:border-box"></i><i style="right:1px;bottom:1px;width:15px;height:7px;background:#e6e6e6;border:1px solid #c8c8c8;box-sizing:border-box"></i><svg class="ic" style="right:5px;top:3px" width="7" height="10" viewBox="0 0 7 10"><path d="M0.5 3.5 L3.5 0.5 L6.5 3.5 Z M0.5 6.5 L3.5 9.5 L6.5 6.5 Z" fill="#000"/></svg></div><div class="spin" style="left:957px;top:100px;width:76px;height:18px"><span class="g" style="left:2px;top:1px">Rows: <b class="hl">2</b></span><i style="right:1px;top:1px;width:15px;height:7px;background:#e6e6e6;border:1px solid #c8c8c8;box-sizing:border-box"></i><i style="right:1px;bottom:1px;width:15px;height:7px;background:#e6e6e6;border:1px solid #c8c8c8;box-sizing:border-box"></i><svg class="ic" style="right:5px;top:3px" width="7" height="10" viewBox="0 0 7 10"><path d="M0.5 3.5 L3.5 0.5 L6.5 3.5 Z M0.5 6.5 L3.5 9.5 L6.5 6.5 Z" fill="#000"/></svg></div><i class="vsep" style="left:1045px;top:89px;height:39px"></i><svg class="ic" style="left:1080px;top:93px" width="16" height="17" viewBox="0 0 16 17"><path d="M1 0.6 L14.6 8.4 L1 16.2 Z" fill="#111"/></svg><span class="g c" style="left:1057px;width:60px;top:115px">Animate</span><div class="spin" style="left:1126px;top:100px;width:59px;height:18px"><span class="g" style="left:2px;top:1px">ID: 1</span><i style="right:1px;top:1px;width:15px;height:7px;background:#e6e6e6;border:1px solid #c8c8c8;box-sizing:border-box"></i><i style="right:1px;bottom:1px;width:15px;height:7px;background:#e6e6e6;border:1px solid #c8c8c8;box-sizing:border-box"></i><svg class="ic" style="right:5px;top:3px" width="7" height="10" viewBox="0 0 7 10"><path d="M0.5 3.5 L3.5 0.5 L6.5 3.5 Z M0.5 6.5 L3.5 9.5 L6.5 6.5 Z" fill="#000"/></svg></div><div class="spin" style="left:1195px;top:100px;width:79px;height:18px"><span class="g" style="left:2px;top:1px">10 msec</span><i style="right:1px;top:1px;width:15px;height:7px;background:#e6e6e6;border:1px solid #c8c8c8;box-sizing:border-box"></i><i style="right:1px;bottom:1px;width:15px;height:7px;background:#e6e6e6;border:1px solid #c8c8c8;box-sizing:border-box"></i><svg class="ic" style="right:5px;top:3px" width="7" height="10" viewBox="0 0 7 10"><path d="M0.5 3.5 L3.5 0.5 L6.5 3.5 Z M0.5 6.5 L3.5 9.5 L6.5 6.5 Z" fill="#000"/></svg></div><i class="vsep" style="left:1286px;top:89px;height:39px"></i><div id="mdi"><div class="vp" style="left:1px;top:1px;width:725px;height:429px;border:5px solid #ff0000"><svg class="mol" width="725" height="429" viewBox="0 0 725 429"><defs><radialGradient id="aC" cx="0.5" cy="0.5" r="0.5" fx="0.52" fy="0.46"><stop offset="0" stop-color="#ffffff"/><stop offset="0.07" stop-color="#d0d0d0"/><stop offset="0.22" stop-color="#969696"/><stop offset="0.55" stop-color="#767676"/><stop offset="0.82" stop-color="#545454"/><stop offset="1" stop-color="#2a2a2a"/></radialGradient><radialGradient id="aH" cx="0.5" cy="0.5" r="0.5" fx="0.52" fy="0.46"><stop offset="0" stop-color="#ffffff"/><stop offset="0.28" stop-color="#f6f6f6"/><stop offset="0.55" stop-color="#dedede"/><stop offset="0.8" stop-color="#b2b2b2"/><stop offset="1" stop-color="#686868"/></radialGradient><radialGradient id="aO" cx="0.5" cy="0.5" r="0.5" fx="0.52" fy="0.46"><stop offset="0" stop-color="#ffd0d0"/><stop offset="0.07" stop-color="#ff6a6a"/><stop offset="0.2" stop-color="#ff1616"/><stop offset="0.55" stop-color="#f00000"/><stop offset="0.82" stop-color="#b80000"/><stop offset="1" stop-color="#5a0000"/></radialGradient><radialGradient id="aN" cx="0.5" cy="0.5" r="0.5" fx="0.52" fy="0.46"><stop offset="0" stop-color="#d0d8ff"/><stop offset="0.07" stop-color="#6a7cff"/><stop offset="0.2" stop-color="#1630ff"/><stop offset="0.55" stop-color="#0008f0"/><stop offset="0.82" stop-color="#0000b0"/><stop offset="1" stop-color="#000058"/></radialGradient><radialGradient id="aS" cx="0.5" cy="0.5" r="0.5" fx="0.52" fy="0.46"><stop offset="0" stop-color="#ffffe0"/><stop offset="0.1" stop-color="#ffff80"/><stop offset="0.25" stop-color="#f0f03c"/><stop offset="0.55" stop-color="#e0e02a"/><stop offset="0.82" stop-color="#a8a814"/><stop offset="1" stop-color="#545400"/></radialGradient></defs><circle cx="236.9" cy="209.4" r="11.0" fill="url(#aH)"/><circle cx="165.8" cy="290.0" r="11.0" fill="url(#aH)"/><g><line x1="166.8" y1="255.6" x2="166.0" y2="280.3" stroke="#565656" stroke-width="8.1"/><line x1="166.8" y1="255.6" x2="166.0" y2="280.3" stroke="#7d7d7d" stroke-width="7.1"/><line x1="166.8" y1="255.6" x2="166.0" y2="280.3" stroke="#9b9b9b" stroke-width="5.4"/><line x1="166.8" y1="255.6" x2="166.0" y2="280.3" stroke="#b8b8b8" stroke-width="2.4"/></g><circle cx="450.2" cy="291.4" r="11.2" fill="url(#aH)"/><circle cx="167.2" cy="241.4" r="16.1" fill="url(#aC)"/><g><line x1="231.3" y1="202.0" x2="235.1" y2="207.0" stroke="#1a1a1a" stroke-width="8.2"/><line x1="231.3" y1="202.0" x2="235.1" y2="207.0" stroke="#262626" stroke-width="7.1"/><line x1="231.3" y1="202.0" x2="235.1" y2="207.0" stroke="#2e2e2e" stroke-width="5.4"/><line x1="231.3" y1="202.0" x2="235.1" y2="207.0" stroke="#3d3d3d" stroke-width="2.5"/></g><g><line x1="154.5" y1="235.1" x2="127.5" y2="221.5" stroke="#565656" stroke-width="8.2"/><line x1="154.5" y1="235.1" x2="127.5" y2="221.5" stroke="#7d7d7d" stroke-width="7.2"/><line x1="154.5" y1="235.1" x2="127.5" y2="221.5" stroke="#9b9b9b" stroke-width="5.4"/><line x1="154.5" y1="235.1" x2="127.5" y2="221.5" stroke="#b8b8b8" stroke-width="2.5"/></g><circle cx="118.6" cy="217.1" r="11.3" fill="url(#aH)"/><g><line x1="216.7" y1="206.8" x2="178.8" y2="233.3" stroke="#393939" stroke-width="8.3"/><line x1="216.7" y1="206.8" x2="178.8" y2="233.3" stroke="#545454" stroke-width="7.2"/><line x1="216.7" y1="206.8" x2="178.8" y2="233.3" stroke="#676767" stroke-width="5.5"/><line x1="216.7" y1="206.8" x2="178.8" y2="233.3" stroke="#888888" stroke-width="2.5"/></g><circle cx="433.0" cy="199.9" r="16.4" fill="url(#aC)"/><g><line x1="439.5" y1="187.1" x2="452.0" y2="162.3" stroke="#565656" stroke-width="8.3"/><line x1="439.5" y1="187.1" x2="452.0" y2="162.3" stroke="#7d7d7d" stroke-width="7.3"/><line x1="439.5" y1="187.1" x2="452.0" y2="162.3" stroke="#9b9b9b" stroke-width="5.5"/><line x1="439.5" y1="187.1" x2="452.0" y2="162.3" stroke="#b8b8b8" stroke-width="2.5"/></g><g><line x1="464.6" y1="272.3" x2="454.9" y2="285.1" stroke="#2c2c2c" stroke-width="8.3"/><line x1="464.6" y1="272.3" x2="454.9" y2="285.1" stroke="#404040" stroke-width="7.3"/><line x1="464.6" y1="272.3" x2="454.9" y2="285.1" stroke="#4f4f4f" stroke-width="5.5"/><line x1="464.6" y1="272.3" x2="454.9" y2="285.1" stroke="#656565" stroke-width="2.5"/></g><circle cx="365.3" cy="174.2" r="15.2" fill="url(#aO)"/><circle cx="456.5" cy="153.3" r="11.4" fill="url(#aH)"/><g><line x1="172.1" y1="244.7" x2="183.5" y2="252.3" stroke="#111111" stroke-width="8.4"/><line x1="172.1" y1="244.7" x2="183.5" y2="252.3" stroke="#191919" stroke-width="7.3"/><line x1="172.1" y1="244.7" x2="183.5" y2="252.3" stroke="#1f1f1f" stroke-width="5.5"/><line x1="172.1" y1="244.7" x2="183.5" y2="252.3" stroke="#2d2d2d" stroke-width="2.5"/></g><g><line x1="354.6" y1="201.7" x2="359.4" y2="184.2" stroke="#301010" stroke-width="4.7"/><line x1="354.6" y1="201.7" x2="359.4" y2="184.2" stroke="#551c1c" stroke-width="3.3"/><line x1="354.6" y1="201.7" x2="359.4" y2="184.2" stroke="#804d4d" stroke-width="0.8"/><line x1="360.6" y1="203.3" x2="365.4" y2="185.8" stroke="#301010" stroke-width="4.7"/><line x1="360.6" y1="203.3" x2="365.4" y2="185.8" stroke="#551c1c" stroke-width="3.3"/><line x1="360.6" y1="203.3" x2="365.4" y2="185.8" stroke="#804d4d" stroke-width="0.8"/></g><g><line x1="201.3" y1="118.8" x2="169.6" y2="104.5" stroke="#521c1c" stroke-width="4.7"/><line x1="201.3" y1="118.8" x2="169.6" y2="104.5" stroke="#913030" stroke-width="3.4"/><line x1="201.3" y1="118.8" x2="169.6" y2="104.5" stroke="#c47c7c" stroke-width="0.8"/><line x1="203.8" y1="113.1" x2="172.2" y2="98.9" stroke="#521c1c" stroke-width="4.7"/><line x1="203.8" y1="113.1" x2="172.2" y2="98.9" stroke="#913030" stroke-width="3.4"/><line x1="203.8" y1="113.1" x2="172.2" y2="98.9" stroke="#c47c7c" stroke-width="0.8"/></g><g><line x1="227.7" y1="113.6" x2="261.0" y2="90.4" stroke="#561d1d" stroke-width="8.4"/><line x1="227.7" y1="113.6" x2="261.0" y2="90.4" stroke="#7d2a2a" stroke-width="7.3"/><line x1="227.7" y1="113.6" x2="261.0" y2="90.4" stroke="#9b3434" stroke-width="5.5"/><line x1="227.7" y1="113.6" x2="261.0" y2="90.4" stroke="#b85858" stroke-width="2.5"/></g><g><line x1="283.4" y1="90.0" x2="305.0" y2="103.9" stroke="#723939" stroke-width="8.4"/><line x1="283.4" y1="90.0" x2="305.0" y2="103.9" stroke="#a75353" stroke-width="7.3"/><line x1="283.4" y1="90.0" x2="305.0" y2="103.9" stroke="#ce6767" stroke-width="5.5"/><line x1="283.4" y1="90.0" x2="305.0" y2="103.9" stroke="#e88888" stroke-width="2.5"/></g><g><line x1="218.2" y1="136.2" x2="226.2" y2="184.2" stroke="#393939" stroke-width="8.4"/><line x1="218.2" y1="136.2" x2="226.2" y2="184.2" stroke="#545454" stroke-width="7.3"/><line x1="218.2" y1="136.2" x2="226.2" y2="184.2" stroke="#676767" stroke-width="5.5"/><line x1="218.2" y1="136.2" x2="226.2" y2="184.2" stroke="#888888" stroke-width="2.5"/></g><circle cx="158.6" cy="96.2" r="15.3" fill="url(#aO)"/><circle cx="272.1" cy="82.7" r="15.3" fill="url(#aO)"/><circle cx="313.6" cy="109.3" r="11.5" fill="url(#aH)"/><circle cx="215.8" cy="121.9" r="16.5" fill="url(#aC)"/><circle cx="228.6" cy="198.5" r="16.5" fill="url(#aC)"/><circle cx="354.4" cy="214.2" r="16.5" fill="url(#aC)"/><g><line x1="444.6" y1="208.2" x2="460.6" y2="219.8" stroke="#525252" stroke-width="8.4"/><line x1="444.6" y1="208.2" x2="460.6" y2="219.8" stroke="#787878" stroke-width="7.3"/><line x1="444.6" y1="208.2" x2="460.6" y2="219.8" stroke="#959595" stroke-width="5.6"/><line x1="444.6" y1="208.2" x2="460.6" y2="219.8" stroke="#b2b2b2" stroke-width="2.5"/></g><g><line x1="419.4" y1="195.4" x2="398.5" y2="188.3" stroke="#565656" stroke-width="8.4"/><line x1="419.4" y1="195.4" x2="398.5" y2="188.3" stroke="#7d7d7d" stroke-width="7.3"/><line x1="419.4" y1="195.4" x2="398.5" y2="188.3" stroke="#9b9b9b" stroke-width="5.6"/><line x1="419.4" y1="195.4" x2="398.5" y2="188.3" stroke="#b8b8b8" stroke-width="2.5"/></g><g><line x1="415.6" y1="235.9" x2="427.7" y2="210.9" stroke="#1a1a1a" stroke-width="8.4"/><line x1="415.6" y1="235.9" x2="427.7" y2="210.9" stroke="#262626" stroke-width="7.3"/><line x1="415.6" y1="235.9" x2="427.7" y2="210.9" stroke="#2f2f2f" stroke-width="5.6"/><line x1="415.6" y1="235.9" x2="427.7" y2="210.9" stroke="#424242" stroke-width="2.5"/></g><circle cx="563.1" cy="271.4" r="11.6" fill="url(#aH)"/><g><line x1="241.9" y1="204.3" x2="274.3" y2="218.6" stroke="#171745" stroke-width="8.5"/><line x1="241.9" y1="204.3" x2="274.3" y2="218.6" stroke="#212164" stroke-width="7.4"/><line x1="241.9" y1="204.3" x2="274.3" y2="218.6" stroke="#29297c" stroke-width="5.6"/><line x1="241.9" y1="204.3" x2="274.3" y2="218.6" stroke="#484898" stroke-width="2.5"/></g><g><line x1="301.2" y1="222.2" x2="340.1" y2="216.4" stroke="#171745" stroke-width="8.5"/><line x1="301.2" y1="222.2" x2="340.1" y2="216.4" stroke="#212164" stroke-width="7.4"/><line x1="301.2" y1="222.2" x2="340.1" y2="216.4" stroke="#29297c" stroke-width="5.6"/><line x1="301.2" y1="222.2" x2="340.1" y2="216.4" stroke="#484898" stroke-width="2.5"/></g><g><line x1="268.0" y1="282.9" x2="274.2" y2="311.5" stroke="#565656" stroke-width="8.5"/><line x1="268.0" y1="282.9" x2="274.2" y2="311.5" stroke="#7d7d7d" stroke-width="7.4"/><line x1="268.0" y1="282.9" x2="274.2" y2="311.5" stroke="#9b9b9b" stroke-width="5.6"/><line x1="268.0" y1="282.9" x2="274.2" y2="311.5" stroke="#b8b8b8" stroke-width="2.5"/></g><g><line x1="366.9" y1="221.6" x2="397.4" y2="239.6" stroke="#393939" stroke-width="8.5"/><line x1="366.9" y1="221.6" x2="397.4" y2="239.6" stroke="#545454" stroke-width="7.4"/><line x1="366.9" y1="221.6" x2="397.4" y2="239.6" stroke="#676767" stroke-width="5.6"/><line x1="366.9" y1="221.6" x2="397.4" y2="239.6" stroke="#888888" stroke-width="2.5"/></g><circle cx="265.0" cy="268.6" r="16.6" fill="url(#aC)"/><circle cx="276.4" cy="321.4" r="11.6" fill="url(#aH)"/><g><line x1="543.6" y1="304.3" x2="558.2" y2="279.8" stroke="#444422" stroke-width="8.5"/><line x1="543.6" y1="304.3" x2="558.2" y2="279.8" stroke="#646432" stroke-width="7.4"/><line x1="543.6" y1="304.3" x2="558.2" y2="279.8" stroke="#7c7c3e" stroke-width="5.6"/><line x1="543.6" y1="304.3" x2="558.2" y2="279.8" stroke="#949456" stroke-width="2.5"/></g><g><line x1="270.6" y1="257.3" x2="281.8" y2="235.1" stroke="#0f0f2c" stroke-width="8.5"/><line x1="270.6" y1="257.3" x2="281.8" y2="235.1" stroke="#151540" stroke-width="7.4"/><line x1="270.6" y1="257.3" x2="281.8" y2="235.1" stroke="#1a1a4f" stroke-width="5.6"/><line x1="270.6" y1="257.3" x2="281.8" y2="235.1" stroke="#2f2f64" stroke-width="2.6"/></g><circle cx="468.8" cy="225.7" r="11.6" fill="url(#aH)"/><g><line x1="203.2" y1="258.1" x2="250.5" y2="266.1" stroke="#393939" stroke-width="8.5"/><line x1="203.2" y1="258.1" x2="250.5" y2="266.1" stroke="#545454" stroke-width="7.4"/><line x1="203.2" y1="258.1" x2="250.5" y2="266.1" stroke="#676767" stroke-width="5.6"/><line x1="203.2" y1="258.1" x2="250.5" y2="266.1" stroke="#888888" stroke-width="2.6"/></g><g><line x1="478.2" y1="249.7" x2="489.9" y2="226.3" stroke="#565656" stroke-width="8.5"/><line x1="478.2" y1="249.7" x2="489.9" y2="226.3" stroke="#7d7d7d" stroke-width="7.4"/><line x1="478.2" y1="249.7" x2="489.9" y2="226.3" stroke="#9b9b9b" stroke-width="5.6"/><line x1="478.2" y1="249.7" x2="489.9" y2="226.3" stroke="#b8b8b8" stroke-width="2.6"/></g><g><line x1="482.9" y1="272.3" x2="524.0" y2="307.1" stroke="#3e3e15" stroke-width="8.5"/><line x1="482.9" y1="272.3" x2="524.0" y2="307.1" stroke="#5a5a1e" stroke-width="7.4"/><line x1="482.9" y1="272.3" x2="524.0" y2="307.1" stroke="#6f6f25" stroke-width="5.6"/><line x1="482.9" y1="272.3" x2="524.0" y2="307.1" stroke="#8a8a41" stroke-width="2.6"/></g><circle cx="287.3" cy="224.2" r="16.0" fill="url(#aN)"/><circle cx="388.7" cy="185.1" r="11.7" fill="url(#aH)"/><circle cx="471.6" cy="262.8" r="16.7" fill="url(#aC)"/><circle cx="494.5" cy="217.1" r="11.7" fill="url(#aH)"/><circle cx="536.0" cy="317.1" r="17.8" fill="url(#aS)"/><g><line x1="424.5" y1="250.8" x2="457.4" y2="259.2" stroke="#393939" stroke-width="8.5"/><line x1="424.5" y1="250.8" x2="457.4" y2="259.2" stroke="#545454" stroke-width="7.4"/><line x1="424.5" y1="250.8" x2="457.4" y2="259.2" stroke="#676767" stroke-width="5.6"/><line x1="424.5" y1="250.8" x2="457.4" y2="259.2" stroke="#888888" stroke-width="2.6"/></g><circle cx="188.6" cy="255.7" r="16.8" fill="url(#aC)"/><circle cx="410.2" cy="247.1" r="16.8" fill="url(#aC)"/><g><line x1="405.3" y1="261.0" x2="396.5" y2="286.0" stroke="#565656" stroke-width="8.6"/><line x1="405.3" y1="261.0" x2="396.5" y2="286.0" stroke="#7d7d7d" stroke-width="7.5"/><line x1="405.3" y1="261.0" x2="396.5" y2="286.0" stroke="#9b9b9b" stroke-width="5.7"/><line x1="405.3" y1="261.0" x2="396.5" y2="286.0" stroke="#b8b8b8" stroke-width="2.6"/></g><circle cx="393.0" cy="295.7" r="11.7" fill="url(#aH)"/><g><line x1="181.0" y1="268.4" x2="168.2" y2="289.7" stroke="#565656" stroke-width="8.6"/><line x1="181.0" y1="268.4" x2="168.2" y2="289.7" stroke="#7d7d7d" stroke-width="7.5"/><line x1="181.0" y1="268.4" x2="168.2" y2="289.7" stroke="#9b9b9b" stroke-width="5.7"/><line x1="181.0" y1="268.4" x2="168.2" y2="289.7" stroke="#b8b8b8" stroke-width="2.6"/></g><g><line x1="273.7" y1="264.3" x2="285.3" y2="258.7" stroke="#1a1a1a" stroke-width="8.6"/><line x1="273.7" y1="264.3" x2="285.3" y2="258.7" stroke="#262626" stroke-width="7.5"/><line x1="273.7" y1="264.3" x2="285.3" y2="258.7" stroke="#2e2e2e" stroke-width="5.7"/><line x1="273.7" y1="264.3" x2="285.3" y2="258.7" stroke="#3d3d3d" stroke-width="2.6"/></g><g><line x1="185.5" y1="241.2" x2="180.9" y2="220.2" stroke="#565656" stroke-width="8.6"/><line x1="185.5" y1="241.2" x2="180.9" y2="220.2" stroke="#7d7d7d" stroke-width="7.5"/><line x1="185.5" y1="241.2" x2="180.9" y2="220.2" stroke="#9b9b9b" stroke-width="5.7"/><line x1="185.5" y1="241.2" x2="180.9" y2="220.2" stroke="#b8b8b8" stroke-width="2.6"/></g><circle cx="162.9" cy="298.6" r="11.8" fill="url(#aH)"/><circle cx="178.6" cy="209.9" r="11.9" fill="url(#aH)"/><circle cx="291.5" cy="255.7" r="11.9" fill="url(#aH)"/></svg><span class="vid" style="left:6px;top:6px">ID: 1</span></div><div class="vp" style="left:739px;top:1px;width:735px;height:439px"><svg class="mol" width="735" height="439" viewBox="0 0 735 439"><defs><radialGradient id="bC" cx="0.5" cy="0.5" r="0.5" fx="0.52" fy="0.46"><stop offset="0" stop-color="#ffffff"/><stop offset="0.07" stop-color="#d0d0d0"/><stop offset="0.22" stop-color="#969696"/><stop offset="0.55" stop-color="#767676"/><stop offset="0.82" stop-color="#545454"/><stop offset="1" stop-color="#2a2a2a"/></radialGradient><radialGradient id="bH" cx="0.5" cy="0.5" r="0.5" fx="0.52" fy="0.46"><stop offset="0" stop-color="#ffffff"/><stop offset="0.28" stop-color="#f6f6f6"/><stop offset="0.55" stop-color="#dedede"/><stop offset="0.8" stop-color="#b2b2b2"/><stop offset="1" stop-color="#686868"/></radialGradient><radialGradient id="bO" cx="0.5" cy="0.5" r="0.5" fx="0.52" fy="0.46"><stop offset="0" stop-color="#ffd0d0"/><stop offset="0.07" stop-color="#ff6a6a"/><stop offset="0.2" stop-color="#ff1616"/><stop offset="0.55" stop-color="#f00000"/><stop offset="0.82" stop-color="#b80000"/><stop offset="1" stop-color="#5a0000"/></radialGradient><radialGradient id="bN" cx="0.5" cy="0.5" r="0.5" fx="0.52" fy="0.46"><stop offset="0" stop-color="#d0d8ff"/><stop offset="0.07" stop-color="#6a7cff"/><stop offset="0.2" stop-color="#1630ff"/><stop offset="0.55" stop-color="#0008f0"/><stop offset="0.82" stop-color="#0000b0"/><stop offset="1" stop-color="#000058"/></radialGradient><radialGradient id="bS" cx="0.5" cy="0.5" r="0.5" fx="0.52" fy="0.46"><stop offset="0" stop-color="#ffffe0"/><stop offset="0.1" stop-color="#ffff80"/><stop offset="0.25" stop-color="#f0f03c"/><stop offset="0.55" stop-color="#e0e02a"/><stop offset="0.82" stop-color="#a8a814"/><stop offset="1" stop-color="#545400"/></radialGradient></defs><circle cx="258.5" cy="253.5" r="12.7" fill="url(#bH)"/><circle cx="202.5" cy="355.0" r="12.7" fill="url(#bH)"/><g><line x1="191.3" y1="313.8" x2="199.6" y2="344.2" stroke="#4a4a4a" stroke-width="9.5"/><line x1="191.3" y1="313.8" x2="199.6" y2="344.2" stroke="#6c6c6c" stroke-width="8.2"/><line x1="191.3" y1="313.8" x2="199.6" y2="344.2" stroke="#858585" stroke-width="6.3"/><line x1="191.3" y1="313.8" x2="199.6" y2="344.2" stroke="#a2a2a2" stroke-width="2.8"/></g><circle cx="187.0" cy="297.8" r="18.7" fill="url(#bC)"/><g><line x1="248.9" y1="242.0" x2="255.4" y2="249.8" stroke="#161616" stroke-width="9.6"/><line x1="248.9" y1="242.0" x2="255.4" y2="249.8" stroke="#202020" stroke-width="8.3"/><line x1="248.9" y1="242.0" x2="255.4" y2="249.8" stroke="#282828" stroke-width="6.3"/><line x1="248.9" y1="242.0" x2="255.4" y2="249.8" stroke="#353535" stroke-width="2.9"/></g><g><line x1="170.9" y1="294.5" x2="136.8" y2="287.3" stroke="#4a4a4a" stroke-width="9.6"/><line x1="170.9" y1="294.5" x2="136.8" y2="287.3" stroke="#6c6c6c" stroke-width="8.3"/><line x1="170.9" y1="294.5" x2="136.8" y2="287.3" stroke="#858585" stroke-width="6.3"/><line x1="170.9" y1="294.5" x2="136.8" y2="287.3" stroke="#a2a2a2" stroke-width="2.9"/></g><circle cx="125.6" cy="285.0" r="13.1" fill="url(#bH)"/><g><line x1="232.7" y1="248.8" x2="198.3" y2="285.8" stroke="#313131" stroke-width="9.7"/><line x1="232.7" y1="248.8" x2="198.3" y2="285.8" stroke="#484848" stroke-width="8.4"/><line x1="232.7" y1="248.8" x2="198.3" y2="285.8" stroke="#595959" stroke-width="6.4"/><line x1="232.7" y1="248.8" x2="198.3" y2="285.8" stroke="#777777" stroke-width="2.9"/></g><circle cx="471.5" cy="164.1" r="19.0" fill="url(#bC)"/><g><line x1="473.8" y1="147.5" x2="477.9" y2="119.3" stroke="#4a4a4a" stroke-width="9.7"/><line x1="473.8" y1="147.5" x2="477.9" y2="119.3" stroke="#6c6c6c" stroke-width="8.5"/><line x1="473.8" y1="147.5" x2="477.9" y2="119.3" stroke="#858585" stroke-width="6.4"/><line x1="473.8" y1="147.5" x2="477.9" y2="119.3" stroke="#a2a2a2" stroke-width="2.9"/></g><circle cx="389.2" cy="171.5" r="17.6" fill="url(#bO)"/><circle cx="479.5" cy="107.7" r="13.2" fill="url(#bH)"/><g><line x1="192.9" y1="298.0" x2="206.6" y2="298.3" stroke="#0f0f0f" stroke-width="9.8"/><line x1="192.9" y1="298.0" x2="206.6" y2="298.3" stroke="#161616" stroke-width="8.5"/><line x1="192.9" y1="298.0" x2="206.6" y2="298.3" stroke="#1b1b1b" stroke-width="6.4"/><line x1="192.9" y1="298.0" x2="206.6" y2="298.3" stroke="#272727" stroke-width="2.9"/></g><g><line x1="384.1" y1="201.6" x2="385.0" y2="182.9" stroke="#2b0e0e" stroke-width="5.5"/><line x1="384.1" y1="201.6" x2="385.0" y2="182.9" stroke="#4c1919" stroke-width="3.9"/><line x1="384.1" y1="201.6" x2="385.0" y2="182.9" stroke="#754646" stroke-width="1.0"/><line x1="391.4" y1="202.0" x2="392.2" y2="183.2" stroke="#2b0e0e" stroke-width="5.5"/><line x1="391.4" y1="202.0" x2="392.2" y2="183.2" stroke="#4c1919" stroke-width="3.9"/><line x1="391.4" y1="202.0" x2="392.2" y2="183.2" stroke="#754646" stroke-width="1.0"/></g><g><line x1="454.8" y1="162.3" x2="430.3" y2="159.6" stroke="#4a4a4a" stroke-width="9.8"/><line x1="454.8" y1="162.3" x2="430.3" y2="159.6" stroke="#6c6c6c" stroke-width="8.5"/><line x1="454.8" y1="162.3" x2="430.3" y2="159.6" stroke="#858585" stroke-width="6.5"/><line x1="454.8" y1="162.3" x2="430.3" y2="159.6" stroke="#a2a2a2" stroke-width="2.9"/></g><g><line x1="188.9" y1="153.5" x2="150.4" y2="147.3" stroke="#471818" stroke-width="5.5"/><line x1="188.9" y1="153.5" x2="150.4" y2="147.3" stroke="#7d2a2a" stroke-width="3.9"/><line x1="188.9" y1="153.5" x2="150.4" y2="147.3" stroke="#af6d6d" stroke-width="1.0"/><line x1="190.1" y1="146.3" x2="151.5" y2="140.1" stroke="#471818" stroke-width="5.5"/><line x1="190.1" y1="146.3" x2="151.5" y2="140.1" stroke="#7d2a2a" stroke-width="3.9"/><line x1="190.1" y1="146.3" x2="151.5" y2="140.1" stroke="#af6d6d" stroke-width="1.0"/></g><g><line x1="217.5" y1="140.0" x2="248.1" y2="105.9" stroke="#4a1919" stroke-width="9.8"/><line x1="217.5" y1="140.0" x2="248.1" y2="105.9" stroke="#6c2424" stroke-width="8.5"/><line x1="217.5" y1="140.0" x2="248.1" y2="105.9" stroke="#852d2d" stroke-width="6.5"/><line x1="217.5" y1="140.0" x2="248.1" y2="105.9" stroke="#a24d4d" stroke-width="2.9"/></g><g><line x1="273.2" y1="99.6" x2="301.0" y2="109.5" stroke="#623131" stroke-width="9.8"/><line x1="273.2" y1="99.6" x2="301.0" y2="109.5" stroke="#8f4848" stroke-width="8.5"/><line x1="273.2" y1="99.6" x2="301.0" y2="109.5" stroke="#b15959" stroke-width="6.5"/><line x1="273.2" y1="99.6" x2="301.0" y2="109.5" stroke="#cc7777" stroke-width="2.9"/></g><g><line x1="213.2" y1="168.0" x2="237.2" y2="221.0" stroke="#313131" stroke-width="9.8"/><line x1="213.2" y1="168.0" x2="237.2" y2="221.0" stroke="#484848" stroke-width="8.5"/><line x1="213.2" y1="168.0" x2="237.2" y2="221.0" stroke="#595959" stroke-width="6.5"/><line x1="213.2" y1="168.0" x2="237.2" y2="221.0" stroke="#777777" stroke-width="2.9"/></g><circle cx="135.6" cy="141.2" r="17.7" fill="url(#bO)"/><circle cx="258.5" cy="94.3" r="17.7" fill="url(#bO)"/><circle cx="312.0" cy="113.5" r="13.3" fill="url(#bH)"/><circle cx="206.2" cy="152.6" r="19.2" fill="url(#bC)"/><circle cx="244.2" cy="236.4" r="19.2" fill="url(#bC)"/><circle cx="387.2" cy="214.4" r="19.2" fill="url(#bC)"/><circle cx="542.4" cy="184.4" r="13.3" fill="url(#bH)"/><g><line x1="487.6" y1="167.6" x2="510.1" y2="172.4" stroke="#474747" stroke-width="9.8"/><line x1="487.6" y1="167.6" x2="510.1" y2="172.4" stroke="#686868" stroke-width="8.6"/><line x1="487.6" y1="167.6" x2="510.1" y2="172.4" stroke="#808080" stroke-width="6.5"/><line x1="487.6" y1="167.6" x2="510.1" y2="172.4" stroke="#9c9c9c" stroke-width="2.9"/></g><g><line x1="537.0" y1="219.6" x2="540.6" y2="195.9" stroke="#4a4a4a" stroke-width="9.8"/><line x1="537.0" y1="219.6" x2="540.6" y2="195.9" stroke="#6c6c6c" stroke-width="8.6"/><line x1="537.0" y1="219.6" x2="540.6" y2="195.9" stroke="#858585" stroke-width="6.5"/><line x1="537.0" y1="219.6" x2="540.6" y2="195.9" stroke="#a2a2a2" stroke-width="2.9"/></g><g><line x1="261.1" y1="237.6" x2="301.3" y2="240.4" stroke="#14143b" stroke-width="9.8"/><line x1="261.1" y1="237.6" x2="301.3" y2="240.4" stroke="#1d1d56" stroke-width="8.6"/><line x1="261.1" y1="237.6" x2="301.3" y2="240.4" stroke="#24246b" stroke-width="6.5"/><line x1="261.1" y1="237.6" x2="301.3" y2="240.4" stroke="#3e3e85" stroke-width="3.0"/></g><g><line x1="332.5" y1="235.7" x2="371.4" y2="220.5" stroke="#14143b" stroke-width="9.8"/><line x1="332.5" y1="235.7" x2="371.4" y2="220.5" stroke="#1d1d56" stroke-width="8.6"/><line x1="332.5" y1="235.7" x2="371.4" y2="220.5" stroke="#24246b" stroke-width="6.5"/><line x1="332.5" y1="235.7" x2="371.4" y2="220.5" stroke="#3e3e85" stroke-width="3.0"/></g><g><line x1="463.2" y1="214.8" x2="469.0" y2="179.6" stroke="#191919" stroke-width="9.8"/><line x1="463.2" y1="214.8" x2="469.0" y2="179.6" stroke="#242424" stroke-width="8.6"/><line x1="463.2" y1="214.8" x2="469.0" y2="179.6" stroke="#2d2d2d" stroke-width="6.5"/><line x1="463.2" y1="214.8" x2="469.0" y2="179.6" stroke="#3f3f3f" stroke-width="3.0"/></g><g><line x1="551.3" y1="237.8" x2="575.5" y2="239.7" stroke="#4a4a4a" stroke-width="9.9"/><line x1="551.3" y1="237.8" x2="575.5" y2="239.7" stroke="#6c6c6c" stroke-width="8.6"/><line x1="551.3" y1="237.8" x2="575.5" y2="239.7" stroke="#858585" stroke-width="6.5"/><line x1="551.3" y1="237.8" x2="575.5" y2="239.7" stroke="#a2a2a2" stroke-width="3.0"/></g><circle cx="418.6" cy="158.3" r="13.4" fill="url(#bH)"/><circle cx="534.4" cy="236.4" r="19.3" fill="url(#bC)"/><circle cx="587.3" cy="240.7" r="13.4" fill="url(#bH)"/><g><line x1="306.1" y1="278.2" x2="313.8" y2="253.4" stroke="#09091b" stroke-width="9.9"/><line x1="306.1" y1="278.2" x2="313.8" y2="253.4" stroke="#0d0d27" stroke-width="8.6"/><line x1="306.1" y1="278.2" x2="313.8" y2="253.4" stroke="#101030" stroke-width="6.5"/><line x1="306.1" y1="278.2" x2="313.8" y2="253.4" stroke="#1d1d3f" stroke-width="3.0"/></g><g><line x1="309.9" y1="306.0" x2="325.6" y2="337.3" stroke="#4a4a4a" stroke-width="9.9"/><line x1="309.9" y1="306.0" x2="325.6" y2="337.3" stroke="#6c6c6c" stroke-width="8.6"/><line x1="309.9" y1="306.0" x2="325.6" y2="337.3" stroke="#858585" stroke-width="6.5"/><line x1="309.9" y1="306.0" x2="325.6" y2="337.3" stroke="#a2a2a2" stroke-width="3.0"/></g><g><line x1="403.7" y1="218.0" x2="443.8" y2="226.9" stroke="#313131" stroke-width="9.9"/><line x1="403.7" y1="218.0" x2="443.8" y2="226.9" stroke="#484848" stroke-width="8.6"/><line x1="403.7" y1="218.0" x2="443.8" y2="226.9" stroke="#595959" stroke-width="6.5"/><line x1="403.7" y1="218.0" x2="443.8" y2="226.9" stroke="#777777" stroke-width="3.0"/></g><circle cx="317.4" cy="241.5" r="18.4" fill="url(#bN)"/><circle cx="302.3" cy="290.7" r="19.4" fill="url(#bC)"/><circle cx="330.8" cy="347.9" r="13.4" fill="url(#bH)"/><g><line x1="477.8" y1="232.0" x2="517.4" y2="235.1" stroke="#313131" stroke-width="9.9"/><line x1="477.8" y1="232.0" x2="517.4" y2="235.1" stroke="#484848" stroke-width="8.6"/><line x1="477.8" y1="232.0" x2="517.4" y2="235.1" stroke="#595959" stroke-width="6.5"/><line x1="477.8" y1="232.0" x2="517.4" y2="235.1" stroke="#777777" stroke-width="3.0"/></g><circle cx="478.6" cy="296.4" r="13.5" fill="url(#bH)"/><g><line x1="229.9" y1="296.9" x2="285.3" y2="292.2" stroke="#313131" stroke-width="9.9"/><line x1="229.9" y1="296.9" x2="285.3" y2="292.2" stroke="#484848" stroke-width="8.6"/><line x1="229.9" y1="296.9" x2="285.3" y2="292.2" stroke="#595959" stroke-width="6.6"/><line x1="229.9" y1="296.9" x2="285.3" y2="292.2" stroke="#777777" stroke-width="3.0"/></g><g><line x1="533.9" y1="253.4" x2="532.6" y2="305.4" stroke="#2e2e0f" stroke-width="9.9"/><line x1="533.9" y1="253.4" x2="532.6" y2="305.4" stroke="#434316" stroke-width="8.7"/><line x1="533.9" y1="253.4" x2="532.6" y2="305.4" stroke="#53531c" stroke-width="6.6"/><line x1="533.9" y1="253.4" x2="532.6" y2="305.4" stroke="#696931" stroke-width="3.0"/></g><circle cx="521.5" cy="174.9" r="13.5" fill="url(#bH)"/><circle cx="212.8" cy="298.4" r="19.5" fill="url(#bC)"/><circle cx="460.6" cy="230.7" r="19.5" fill="url(#bC)"/><g><line x1="517.1" y1="315.9" x2="488.4" y2="301.4" stroke="#414120" stroke-width="10.0"/><line x1="517.1" y1="315.9" x2="488.4" y2="301.4" stroke="#5f5f2f" stroke-width="8.7"/><line x1="517.1" y1="315.9" x2="488.4" y2="301.4" stroke="#75753b" stroke-width="6.6"/><line x1="517.1" y1="315.9" x2="488.4" y2="301.4" stroke="#8d8d51" stroke-width="3.0"/></g><g><line x1="458.5" y1="247.7" x2="455.2" y2="275.1" stroke="#4a4a4a" stroke-width="10.0"/><line x1="458.5" y1="247.7" x2="455.2" y2="275.1" stroke="#6c6c6c" stroke-width="8.7"/><line x1="458.5" y1="247.7" x2="455.2" y2="275.1" stroke="#858585" stroke-width="6.6"/><line x1="458.5" y1="247.7" x2="455.2" y2="275.1" stroke="#a2a2a2" stroke-width="3.0"/></g><circle cx="453.8" cy="287.0" r="13.6" fill="url(#bH)"/><g><line x1="208.1" y1="315.0" x2="200.9" y2="340.6" stroke="#4a4a4a" stroke-width="10.0"/><line x1="208.1" y1="315.0" x2="200.9" y2="340.6" stroke="#6c6c6c" stroke-width="8.7"/><line x1="208.1" y1="315.0" x2="200.9" y2="340.6" stroke="#858585" stroke-width="6.6"/><line x1="208.1" y1="315.0" x2="200.9" y2="340.6" stroke="#a2a2a2" stroke-width="3.0"/></g><g><line x1="311.1" y1="281.6" x2="322.8" y2="269.5" stroke="#1e1e1e" stroke-width="10.0"/><line x1="311.1" y1="281.6" x2="322.8" y2="269.5" stroke="#2d2d2d" stroke-width="8.7"/><line x1="311.1" y1="281.6" x2="322.8" y2="269.5" stroke="#373737" stroke-width="6.6"/><line x1="311.1" y1="281.6" x2="322.8" y2="269.5" stroke="#484848" stroke-width="3.0"/></g><circle cx="532.1" cy="323.6" r="20.7" fill="url(#bS)"/><g><line x1="205.5" y1="282.8" x2="194.2" y2="258.8" stroke="#4a4a4a" stroke-width="10.1"/><line x1="205.5" y1="282.8" x2="194.2" y2="258.8" stroke="#6c6c6c" stroke-width="8.8"/><line x1="205.5" y1="282.8" x2="194.2" y2="258.8" stroke="#858585" stroke-width="6.6"/><line x1="205.5" y1="282.8" x2="194.2" y2="258.8" stroke="#a2a2a2" stroke-width="3.0"/></g><circle cx="197.6" cy="352.2" r="13.7" fill="url(#bH)"/><circle cx="189.1" cy="247.8" r="13.8" fill="url(#bH)"/><circle cx="329.1" cy="263.0" r="13.8" fill="url(#bH)"/></svg><span class="vid" style="left:11px;top:11px">ID: 2</span></div><div class="vp" style="left:1px;top:443px;width:735px;height:439px"><svg class="mol" width="735" height="438" viewBox="0 0 735 438"><defs><radialGradient id="cC" cx="0.5" cy="0.5" r="0.5" fx="0.52" fy="0.46"><stop offset="0" stop-color="#ffffff"/><stop offset="0.07" stop-color="#d0d0d0"/><stop offset="0.22" stop-color="#969696"/><stop offset="0.55" stop-color="#767676"/><stop offset="0.82" stop-color="#545454"/><stop offset="1" stop-color="#2a2a2a"/></radialGradient><radialGradient id="cH" cx="0.5" cy="0.5" r="0.5" fx="0.52" fy="0.46"><stop offset="0" stop-color="#ffffff"/><stop offset="0.28" stop-color="#f6f6f6"/><stop offset="0.55" stop-color="#dedede"/><stop offset="0.8" stop-color="#b2b2b2"/><stop offset="1" stop-color="#686868"/></radialGradient><radialGradient id="cO" cx="0.5" cy="0.5" r="0.5" fx="0.52" fy="0.46"><stop offset="0" stop-color="#ffd0d0"/><stop offset="0.07" stop-color="#ff6a6a"/><stop offset="0.2" stop-color="#ff1616"/><stop offset="0.55" stop-color="#f00000"/><stop offset="0.82" stop-color="#b80000"/><stop offset="1" stop-color="#5a0000"/></radialGradient><radialGradient id="cN" cx="0.5" cy="0.5" r="0.5" fx="0.52" fy="0.46"><stop offset="0" stop-color="#d0d8ff"/><stop offset="0.07" stop-color="#6a7cff"/><stop offset="0.2" stop-color="#1630ff"/><stop offset="0.55" stop-color="#0008f0"/><stop offset="0.82" stop-color="#0000b0"/><stop offset="1" stop-color="#000058"/></radialGradient><radialGradient id="cS" cx="0.5" cy="0.5" r="0.5" fx="0.52" fy="0.46"><stop offset="0" stop-color="#ffffe0"/><stop offset="0.1" stop-color="#ffff80"/><stop offset="0.25" stop-color="#f0f03c"/><stop offset="0.55" stop-color="#e0e02a"/><stop offset="0.82" stop-color="#a8a814"/><stop offset="1" stop-color="#545400"/></radialGradient></defs><circle cx="229.4" cy="201.5" r="10.2" fill="url(#cH)"/><circle cx="182.2" cy="289.6" r="10.3" fill="url(#cH)"/><g><line x1="180.2" y1="263.6" x2="181.6" y2="281.3" stroke="#3f3f3f" stroke-width="7.6"/><line x1="180.2" y1="263.6" x2="181.6" y2="281.3" stroke="#5c5c5c" stroke-width="6.6"/><line x1="180.2" y1="263.6" x2="181.6" y2="281.3" stroke="#727272" stroke-width="5.0"/><line x1="180.2" y1="263.6" x2="181.6" y2="281.3" stroke="#8d8d8d" stroke-width="2.3"/></g><circle cx="440.9" cy="234.4" r="10.4" fill="url(#cH)"/><circle cx="179.3" cy="251.5" r="15.0" fill="url(#cC)"/><g><line x1="227.4" y1="199.2" x2="228.7" y2="200.8" stroke="#191919" stroke-width="7.7"/><line x1="227.4" y1="199.2" x2="228.7" y2="200.8" stroke="#242424" stroke-width="6.7"/><line x1="227.4" y1="199.2" x2="228.7" y2="200.8" stroke="#2d2d2d" stroke-width="5.1"/><line x1="227.4" y1="199.2" x2="228.7" y2="200.8" stroke="#3b3b3b" stroke-width="2.3"/></g><g><line x1="166.7" y1="247.6" x2="139.6" y2="239.1" stroke="#535353" stroke-width="7.7"/><line x1="166.7" y1="247.6" x2="139.6" y2="239.1" stroke="#797979" stroke-width="6.7"/><line x1="166.7" y1="247.6" x2="139.6" y2="239.1" stroke="#959595" stroke-width="5.1"/><line x1="166.7" y1="247.6" x2="139.6" y2="239.1" stroke="#b3b3b3" stroke-width="2.3"/></g><circle cx="130.7" cy="236.4" r="10.5" fill="url(#cH)"/><g><line x1="217.5" y1="208.2" x2="188.1" y2="241.6" stroke="#373737" stroke-width="7.8"/><line x1="217.5" y1="208.2" x2="188.1" y2="241.6" stroke="#515151" stroke-width="6.8"/><line x1="217.5" y1="208.2" x2="188.1" y2="241.6" stroke="#646464" stroke-width="5.2"/><line x1="217.5" y1="208.2" x2="188.1" y2="241.6" stroke="#848484" stroke-width="2.3"/></g><g><line x1="452.8" y1="223.8" x2="444.8" y2="230.9" stroke="#191919" stroke-width="7.8"/><line x1="452.8" y1="223.8" x2="444.8" y2="230.9" stroke="#242424" stroke-width="6.8"/><line x1="452.8" y1="223.8" x2="444.8" y2="230.9" stroke="#2d2d2d" stroke-width="5.2"/><line x1="452.8" y1="223.8" x2="444.8" y2="230.9" stroke="#3b3b3b" stroke-width="2.3"/></g><circle cx="425.2" cy="190.1" r="15.3" fill="url(#cC)"/><g><line x1="428.0" y1="176.9" x2="433.8" y2="149.2" stroke="#535353" stroke-width="7.8"/><line x1="428.0" y1="176.9" x2="433.8" y2="149.2" stroke="#797979" stroke-width="6.8"/><line x1="428.0" y1="176.9" x2="433.8" y2="149.2" stroke="#959595" stroke-width="5.2"/><line x1="428.0" y1="176.9" x2="433.8" y2="149.2" stroke="#b3b3b3" stroke-width="2.4"/></g><circle cx="346.0" cy="147.2" r="14.2" fill="url(#cO)"/><circle cx="435.8" cy="140.0" r="10.6" fill="url(#cH)"/><g><line x1="185.4" y1="256.8" x2="199.6" y2="269.0" stroke="#111111" stroke-width="7.9"/><line x1="185.4" y1="256.8" x2="199.6" y2="269.0" stroke="#181818" stroke-width="6.9"/><line x1="185.4" y1="256.8" x2="199.6" y2="269.0" stroke="#1e1e1e" stroke-width="5.2"/><line x1="185.4" y1="256.8" x2="199.6" y2="269.0" stroke="#2b2b2b" stroke-width="2.4"/></g><g><line x1="342.5" y1="180.8" x2="342.9" y2="159.6" stroke="#4f1b1b" stroke-width="4.4"/><line x1="342.5" y1="180.8" x2="342.9" y2="159.6" stroke="#8c2f2f" stroke-width="3.2"/><line x1="342.5" y1="180.8" x2="342.9" y2="159.6" stroke="#bf7878" stroke-width="0.8"/><line x1="348.3" y1="180.9" x2="348.7" y2="159.8" stroke="#4f1b1b" stroke-width="4.4"/><line x1="348.3" y1="180.9" x2="348.7" y2="159.8" stroke="#8c2f2f" stroke-width="3.2"/><line x1="348.3" y1="180.9" x2="348.7" y2="159.8" stroke="#bf7878" stroke-width="0.8"/></g><g><line x1="412.0" y1="190.3" x2="393.6" y2="190.5" stroke="#4e4e4e" stroke-width="7.9"/><line x1="412.0" y1="190.3" x2="393.6" y2="190.5" stroke="#717171" stroke-width="6.9"/><line x1="412.0" y1="190.3" x2="393.6" y2="190.5" stroke="#8c8c8c" stroke-width="5.2"/><line x1="412.0" y1="190.3" x2="393.6" y2="190.5" stroke="#a9a9a9" stroke-width="2.4"/></g><g><line x1="190.3" y1="132.1" x2="159.5" y2="124.9" stroke="#4f1b1b" stroke-width="4.4"/><line x1="190.3" y1="132.1" x2="159.5" y2="124.9" stroke="#8c2f2f" stroke-width="3.2"/><line x1="190.3" y1="132.1" x2="159.5" y2="124.9" stroke="#bf7878" stroke-width="0.8"/><line x1="191.7" y1="126.4" x2="160.8" y2="119.2" stroke="#4f1b1b" stroke-width="4.4"/><line x1="191.7" y1="126.4" x2="160.8" y2="119.2" stroke="#8c2f2f" stroke-width="3.2"/><line x1="191.7" y1="126.4" x2="160.8" y2="119.2" stroke="#bf7878" stroke-width="0.8"/></g><g><line x1="213.8" y1="122.8" x2="241.0" y2="96.0" stroke="#531c1c" stroke-width="7.9"/><line x1="213.8" y1="122.8" x2="241.0" y2="96.0" stroke="#792828" stroke-width="6.9"/><line x1="213.8" y1="122.8" x2="241.0" y2="96.0" stroke="#953232" stroke-width="5.2"/><line x1="213.8" y1="122.8" x2="241.0" y2="96.0" stroke="#b35555" stroke-width="2.4"/></g><g><line x1="261.7" y1="91.5" x2="281.1" y2="98.8" stroke="#6e3737" stroke-width="7.9"/><line x1="261.7" y1="91.5" x2="281.1" y2="98.8" stroke="#a15050" stroke-width="6.9"/><line x1="261.7" y1="91.5" x2="281.1" y2="98.8" stroke="#c76363" stroke-width="5.2"/><line x1="261.7" y1="91.5" x2="281.1" y2="98.8" stroke="#e18484" stroke-width="2.4"/></g><g><line x1="208.6" y1="145.2" x2="222.1" y2="185.2" stroke="#373737" stroke-width="7.9"/><line x1="208.6" y1="145.2" x2="222.1" y2="185.2" stroke="#515151" stroke-width="6.9"/><line x1="208.6" y1="145.2" x2="222.1" y2="185.2" stroke="#646464" stroke-width="5.2"/><line x1="208.6" y1="145.2" x2="222.1" y2="185.2" stroke="#848484" stroke-width="2.4"/></g><circle cx="147.9" cy="119.2" r="14.3" fill="url(#cO)"/><circle cx="249.9" cy="87.2" r="14.3" fill="url(#cO)"/><circle cx="290.0" cy="102.0" r="10.7" fill="url(#cH)"/><circle cx="204.2" cy="132.3" r="15.4" fill="url(#cC)"/><circle cx="226.5" cy="198.1" r="15.4" fill="url(#cC)"/><circle cx="345.1" cy="194.4" r="15.4" fill="url(#cC)"/><circle cx="472.9" cy="167.8" r="10.7" fill="url(#cH)"/><g><line x1="239.3" y1="202.4" x2="274.8" y2="214.5" stroke="#161642" stroke-width="7.9"/><line x1="239.3" y1="202.4" x2="274.8" y2="214.5" stroke="#202061" stroke-width="6.9"/><line x1="239.3" y1="202.4" x2="274.8" y2="214.5" stroke="#282878" stroke-width="5.2"/><line x1="239.3" y1="202.4" x2="274.8" y2="214.5" stroke="#454593" stroke-width="2.4"/></g><g><line x1="299.1" y1="213.7" x2="332.6" y2="199.6" stroke="#161642" stroke-width="7.9"/><line x1="299.1" y1="213.7" x2="332.6" y2="199.6" stroke="#202061" stroke-width="6.9"/><line x1="299.1" y1="213.7" x2="332.6" y2="199.6" stroke="#282878" stroke-width="5.2"/><line x1="299.1" y1="213.7" x2="332.6" y2="199.6" stroke="#454593" stroke-width="2.4"/></g><g><line x1="409.9" y1="215.1" x2="420.5" y2="197.7" stroke="#111111" stroke-width="7.9"/><line x1="409.9" y1="215.1" x2="420.5" y2="197.7" stroke="#181818" stroke-width="6.9"/><line x1="409.9" y1="215.1" x2="420.5" y2="197.7" stroke="#1e1e1e" stroke-width="5.2"/><line x1="409.9" y1="215.1" x2="420.5" y2="197.7" stroke="#2b2b2b" stroke-width="2.4"/></g><g><line x1="462.3" y1="205.5" x2="470.4" y2="176.8" stroke="#535353" stroke-width="7.9"/><line x1="462.3" y1="205.5" x2="470.4" y2="176.8" stroke="#797979" stroke-width="6.9"/><line x1="462.3" y1="205.5" x2="470.4" y2="176.8" stroke="#959595" stroke-width="5.2"/><line x1="462.3" y1="205.5" x2="470.4" y2="176.8" stroke="#b3b3b3" stroke-width="2.4"/></g><circle cx="384.3" cy="190.6" r="10.8" fill="url(#cH)"/><circle cx="563.0" cy="247.3" r="10.8" fill="url(#cH)"/><g><line x1="280.3" y1="258.9" x2="284.9" y2="231.4" stroke="#161642" stroke-width="8.0"/><line x1="280.3" y1="258.9" x2="284.9" y2="231.4" stroke="#202061" stroke-width="6.9"/><line x1="280.3" y1="258.9" x2="284.9" y2="231.4" stroke="#282878" stroke-width="5.3"/><line x1="280.3" y1="258.9" x2="284.9" y2="231.4" stroke="#454593" stroke-width="2.4"/></g><g><line x1="283.0" y1="285.1" x2="291.6" y2="307.0" stroke="#535353" stroke-width="8.0"/><line x1="283.0" y1="285.1" x2="291.6" y2="307.0" stroke="#797979" stroke-width="6.9"/><line x1="283.0" y1="285.1" x2="291.6" y2="307.0" stroke="#959595" stroke-width="5.3"/><line x1="283.0" y1="285.1" x2="291.6" y2="307.0" stroke="#b3b3b3" stroke-width="2.4"/></g><g><line x1="357.4" y1="200.2" x2="392.7" y2="217.0" stroke="#373737" stroke-width="8.0"/><line x1="357.4" y1="200.2" x2="392.7" y2="217.0" stroke="#515151" stroke-width="6.9"/><line x1="357.4" y1="200.2" x2="392.7" y2="217.0" stroke="#646464" stroke-width="5.3"/><line x1="357.4" y1="200.2" x2="392.7" y2="217.0" stroke="#848484" stroke-width="2.4"/></g><circle cx="287.1" cy="218.7" r="14.7" fill="url(#cN)"/><circle cx="278.0" cy="272.4" r="15.5" fill="url(#cC)"/><circle cx="295.1" cy="315.9" r="10.8" fill="url(#cH)"/><circle cx="458.6" cy="218.7" r="15.5" fill="url(#cC)"/><g><line x1="538.2" y1="259.6" x2="556.7" y2="250.4" stroke="#2c2c16" stroke-width="8.0"/><line x1="538.2" y1="259.6" x2="556.7" y2="250.4" stroke="#404020" stroke-width="6.9"/><line x1="538.2" y1="259.6" x2="556.7" y2="250.4" stroke="#4f4f27" stroke-width="5.3"/><line x1="538.2" y1="259.6" x2="556.7" y2="250.4" stroke="#616138" stroke-width="2.4"/></g><g><line x1="470.1" y1="226.1" x2="516.5" y2="256.4" stroke="#4c4c19" stroke-width="8.0"/><line x1="470.1" y1="226.1" x2="516.5" y2="256.4" stroke="#6f6f25" stroke-width="7.0"/><line x1="470.1" y1="226.1" x2="516.5" y2="256.4" stroke="#89892e" stroke-width="5.3"/><line x1="470.1" y1="226.1" x2="516.5" y2="256.4" stroke="#a6a64f" stroke-width="2.4"/></g><g><line x1="219.7" y1="274.0" x2="264.3" y2="272.8" stroke="#373737" stroke-width="8.0"/><line x1="219.7" y1="274.0" x2="264.3" y2="272.8" stroke="#515151" stroke-width="7.0"/><line x1="219.7" y1="274.0" x2="264.3" y2="272.8" stroke="#646464" stroke-width="5.3"/><line x1="219.7" y1="274.0" x2="264.3" y2="272.8" stroke="#848484" stroke-width="2.4"/></g><g><line x1="417.9" y1="221.9" x2="446.0" y2="219.7" stroke="#2c2c2c" stroke-width="8.0"/><line x1="417.9" y1="221.9" x2="446.0" y2="219.7" stroke="#404040" stroke-width="7.0"/><line x1="417.9" y1="221.9" x2="446.0" y2="219.7" stroke="#4f4f4f" stroke-width="5.3"/><line x1="417.9" y1="221.9" x2="446.0" y2="219.7" stroke="#6b6b6b" stroke-width="2.4"/></g><circle cx="528.7" cy="264.4" r="16.5" fill="url(#cS)"/><g><line x1="436.9" y1="196.6" x2="456.6" y2="207.6" stroke="#535353" stroke-width="8.0"/><line x1="436.9" y1="196.6" x2="456.6" y2="207.6" stroke="#797979" stroke-width="7.0"/><line x1="436.9" y1="196.6" x2="456.6" y2="207.6" stroke="#959595" stroke-width="5.3"/><line x1="436.9" y1="196.6" x2="456.6" y2="207.6" stroke="#b3b3b3" stroke-width="2.4"/></g><circle cx="205.9" cy="274.4" r="15.7" fill="url(#cC)"/><circle cx="405.2" cy="223.0" r="15.7" fill="url(#cC)"/><g><line x1="403.3" y1="236.6" x2="399.3" y2="265.7" stroke="#535353" stroke-width="8.1"/><line x1="403.3" y1="236.6" x2="399.3" y2="265.7" stroke="#797979" stroke-width="7.0"/><line x1="403.3" y1="236.6" x2="399.3" y2="265.7" stroke="#959595" stroke-width="5.3"/><line x1="403.3" y1="236.6" x2="399.3" y2="265.7" stroke="#b3b3b3" stroke-width="2.4"/></g><circle cx="398.0" cy="275.3" r="10.9" fill="url(#cH)"/><g><line x1="201.6" y1="287.5" x2="193.3" y2="312.4" stroke="#535353" stroke-width="8.1"/><line x1="201.6" y1="287.5" x2="193.3" y2="312.4" stroke="#797979" stroke-width="7.0"/><line x1="201.6" y1="287.5" x2="193.3" y2="312.4" stroke="#959595" stroke-width="5.3"/><line x1="201.6" y1="287.5" x2="193.3" y2="312.4" stroke="#b3b3b3" stroke-width="2.4"/></g><g><line x1="286.9" y1="270.5" x2="298.8" y2="268.0" stroke="#191919" stroke-width="8.1"/><line x1="286.9" y1="270.5" x2="298.8" y2="268.0" stroke="#242424" stroke-width="7.0"/><line x1="286.9" y1="270.5" x2="298.8" y2="268.0" stroke="#2d2d2d" stroke-width="5.3"/><line x1="286.9" y1="270.5" x2="298.8" y2="268.0" stroke="#3b3b3b" stroke-width="2.4"/></g><g><line x1="201.9" y1="263.5" x2="196.5" y2="249.2" stroke="#313131" stroke-width="8.1"/><line x1="201.9" y1="263.5" x2="196.5" y2="249.2" stroke="#484848" stroke-width="7.1"/><line x1="201.9" y1="263.5" x2="196.5" y2="249.2" stroke="#595959" stroke-width="5.4"/><line x1="201.9" y1="263.5" x2="196.5" y2="249.2" stroke="#707070" stroke-width="2.4"/></g><circle cx="190.2" cy="321.6" r="11.0" fill="url(#cH)"/><circle cx="193.6" cy="241.5" r="11.1" fill="url(#cH)"/><circle cx="305.1" cy="266.7" r="11.1" fill="url(#cH)"/><circle cx="465.2" cy="212.4" r="11.1" fill="url(#cH)"/></svg><span class="vid" style="left:11px;top:11px">ID: 3</span></div><div class="vp" style="left:739px;top:443px;width:735px;height:439px"><svg class="mol" width="735" height="438" viewBox="0 0 735 438"><defs><radialGradient id="dC" cx="0.5" cy="0.5" r="0.5" fx="0.52" fy="0.46"><stop offset="0" stop-color="#ffffff"/><stop offset="0.07" stop-color="#d0d0d0"/><stop offset="0.22" stop-color="#969696"/><stop offset="0.55" stop-color="#767676"/><stop offset="0.82" stop-color="#545454"/><stop offset="1" stop-color="#2a2a2a"/></radialGradient><radialGradient id="dH" cx="0.5" cy="0.5" r="0.5" fx="0.52" fy="0.46"><stop offset="0" stop-color="#ffffff"/><stop offset="0.28" stop-color="#f6f6f6"/><stop offset="0.55" stop-color="#dedede"/><stop offset="0.8" stop-color="#b2b2b2"/><stop offset="1" stop-color="#686868"/></radialGradient><radialGradient id="dO" cx="0.5" cy="0.5" r="0.5" fx="0.52" fy="0.46"><stop offset="0" stop-color="#ffd0d0"/><stop offset="0.07" stop-color="#ff6a6a"/><stop offset="0.2" stop-color="#ff1616"/><stop offset="0.55" stop-color="#f00000"/><stop offset="0.82" stop-color="#b80000"/><stop offset="1" stop-color="#5a0000"/></radialGradient><radialGradient id="dN" cx="0.5" cy="0.5" r="0.5" fx="0.52" fy="0.46"><stop offset="0" stop-color="#d0d8ff"/><stop offset="0.07" stop-color="#6a7cff"/><stop offset="0.2" stop-color="#1630ff"/><stop offset="0.55" stop-color="#0008f0"/><stop offset="0.82" stop-color="#0000b0"/><stop offset="1" stop-color="#000058"/></radialGradient><radialGradient id="dS" cx="0.5" cy="0.5" r="0.5" fx="0.52" fy="0.46"><stop offset="0" stop-color="#ffffe0"/><stop offset="0.1" stop-color="#ffff80"/><stop offset="0.25" stop-color="#f0f03c"/><stop offset="0.55" stop-color="#e0e02a"/><stop offset="0.82" stop-color="#a8a814"/><stop offset="1" stop-color="#545400"/></radialGradient></defs><circle cx="270.0" cy="218.7" r="11.3" fill="url(#dH)"/><circle cx="224.2" cy="321.6" r="11.3" fill="url(#dH)"/><g><line x1="213.3" y1="290.9" x2="220.9" y2="312.2" stroke="#505050" stroke-width="8.3"/><line x1="213.3" y1="290.9" x2="220.9" y2="312.2" stroke="#747474" stroke-width="7.2"/><line x1="213.3" y1="290.9" x2="220.9" y2="312.2" stroke="#909090" stroke-width="5.5"/><line x1="213.3" y1="290.9" x2="220.9" y2="312.2" stroke="#adadad" stroke-width="2.5"/></g><circle cx="494.9" cy="226.7" r="11.4" fill="url(#dH)"/><circle cx="208.5" cy="277.3" r="16.5" fill="url(#dC)"/><g><line x1="258.9" y1="216.3" x2="266.4" y2="217.9" stroke="#181818" stroke-width="8.4"/><line x1="258.9" y1="216.3" x2="266.4" y2="217.9" stroke="#232323" stroke-width="7.3"/><line x1="258.9" y1="216.3" x2="266.4" y2="217.9" stroke="#2b2b2b" stroke-width="5.5"/><line x1="258.9" y1="216.3" x2="266.4" y2="217.9" stroke="#393939" stroke-width="2.5"/></g><g><line x1="194.2" y1="274.7" x2="165.6" y2="269.6" stroke="#505050" stroke-width="8.4"/><line x1="194.2" y1="274.7" x2="165.6" y2="269.6" stroke="#747474" stroke-width="7.3"/><line x1="194.2" y1="274.7" x2="165.6" y2="269.6" stroke="#909090" stroke-width="5.6"/><line x1="194.2" y1="274.7" x2="165.6" y2="269.6" stroke="#adadad" stroke-width="2.5"/></g><circle cx="155.6" cy="267.8" r="11.6" fill="url(#dH)"/><g><line x1="244.9" y1="227.3" x2="217.0" y2="265.5" stroke="#353535" stroke-width="8.5"/><line x1="244.9" y1="227.3" x2="217.0" y2="265.5" stroke="#4e4e4e" stroke-width="7.4"/><line x1="244.9" y1="227.3" x2="217.0" y2="265.5" stroke="#606060" stroke-width="5.6"/><line x1="244.9" y1="227.3" x2="217.0" y2="265.5" stroke="#808080" stroke-width="2.5"/></g><g><line x1="501.3" y1="208.7" x2="497.0" y2="220.9" stroke="#181818" stroke-width="8.5"/><line x1="501.3" y1="208.7" x2="497.0" y2="220.9" stroke="#232323" stroke-width="7.4"/><line x1="501.3" y1="208.7" x2="497.0" y2="220.9" stroke="#2b2b2b" stroke-width="5.6"/><line x1="501.3" y1="208.7" x2="497.0" y2="220.9" stroke="#393939" stroke-width="2.5"/></g><circle cx="446.3" cy="162.1" r="16.7" fill="url(#dC)"/><g><line x1="448.0" y1="147.4" x2="451.2" y2="119.7" stroke="#505050" stroke-width="8.5"/><line x1="448.0" y1="147.4" x2="451.2" y2="119.7" stroke="#747474" stroke-width="7.4"/><line x1="448.0" y1="147.4" x2="451.2" y2="119.7" stroke="#909090" stroke-width="5.6"/><line x1="448.0" y1="147.4" x2="451.2" y2="119.7" stroke="#adadad" stroke-width="2.6"/></g><circle cx="376.6" cy="146.6" r="15.5" fill="url(#dO)"/><circle cx="452.3" cy="109.5" r="11.7" fill="url(#dH)"/><g><line x1="213.7" y1="279.9" x2="225.9" y2="286.0" stroke="#101010" stroke-width="8.6"/><line x1="213.7" y1="279.9" x2="225.9" y2="286.0" stroke="#171717" stroke-width="7.5"/><line x1="213.7" y1="279.9" x2="225.9" y2="286.0" stroke="#1d1d1d" stroke-width="5.7"/><line x1="213.7" y1="279.9" x2="225.9" y2="286.0" stroke="#2a2a2a" stroke-width="2.6"/></g><g><line x1="374.2" y1="178.1" x2="373.7" y2="158.5" stroke="#321111" stroke-width="4.8"/><line x1="374.2" y1="178.1" x2="373.7" y2="158.5" stroke="#571d1d" stroke-width="3.4"/><line x1="374.2" y1="178.1" x2="373.7" y2="158.5" stroke="#844f4f" stroke-width="0.9"/><line x1="380.6" y1="178.0" x2="380.1" y2="158.4" stroke="#321111" stroke-width="4.8"/><line x1="380.6" y1="178.0" x2="380.1" y2="158.4" stroke="#571d1d" stroke-width="3.4"/><line x1="380.6" y1="178.0" x2="380.1" y2="158.4" stroke="#844f4f" stroke-width="0.9"/></g><g><line x1="431.6" y1="163.0" x2="409.0" y2="164.5" stroke="#505050" stroke-width="8.6"/><line x1="431.6" y1="163.0" x2="409.0" y2="164.5" stroke="#747474" stroke-width="7.5"/><line x1="431.6" y1="163.0" x2="409.0" y2="164.5" stroke="#909090" stroke-width="5.7"/><line x1="431.6" y1="163.0" x2="409.0" y2="164.5" stroke="#adadad" stroke-width="2.6"/></g><g><line x1="202.5" y1="148.2" x2="168.9" y2="144.7" stroke="#4d1a1a" stroke-width="4.8"/><line x1="202.5" y1="148.2" x2="168.9" y2="144.7" stroke="#872d2d" stroke-width="3.4"/><line x1="202.5" y1="148.2" x2="168.9" y2="144.7" stroke="#ba7474" stroke-width="0.9"/><line x1="203.2" y1="141.9" x2="169.6" y2="138.3" stroke="#4d1a1a" stroke-width="4.8"/><line x1="203.2" y1="141.9" x2="169.6" y2="138.3" stroke="#872d2d" stroke-width="3.4"/><line x1="203.2" y1="141.9" x2="169.6" y2="138.3" stroke="#ba7474" stroke-width="0.9"/></g><g><line x1="226.4" y1="134.6" x2="250.4" y2="101.7" stroke="#501b1b" stroke-width="8.6"/><line x1="226.4" y1="134.6" x2="250.4" y2="101.7" stroke="#742727" stroke-width="7.5"/><line x1="226.4" y1="134.6" x2="250.4" y2="101.7" stroke="#903030" stroke-width="5.7"/><line x1="226.4" y1="134.6" x2="250.4" y2="101.7" stroke="#ad5252" stroke-width="2.6"/></g><g><line x1="271.8" y1="94.0" x2="297.0" y2="100.3" stroke="#6a3535" stroke-width="8.6"/><line x1="271.8" y1="94.0" x2="297.0" y2="100.3" stroke="#9b4e4e" stroke-width="7.5"/><line x1="271.8" y1="94.0" x2="297.0" y2="100.3" stroke="#c06060" stroke-width="5.7"/><line x1="271.8" y1="94.0" x2="297.0" y2="100.3" stroke="#da8080" stroke-width="2.6"/></g><g><line x1="224.6" y1="159.8" x2="246.7" y2="202.1" stroke="#353535" stroke-width="8.6"/><line x1="224.6" y1="159.8" x2="246.7" y2="202.1" stroke="#4e4e4e" stroke-width="7.5"/><line x1="224.6" y1="159.8" x2="246.7" y2="202.1" stroke="#606060" stroke-width="5.7"/><line x1="224.6" y1="159.8" x2="246.7" y2="202.1" stroke="#808080" stroke-width="2.6"/></g><circle cx="155.6" cy="140.0" r="15.6" fill="url(#dO)"/><circle cx="258.5" cy="90.6" r="15.6" fill="url(#dO)"/><circle cx="307.1" cy="102.9" r="11.8" fill="url(#dH)"/><circle cx="217.6" cy="146.6" r="16.9" fill="url(#dC)"/><circle cx="253.7" cy="215.2" r="16.9" fill="url(#dC)"/><circle cx="377.7" cy="190.9" r="16.9" fill="url(#dC)"/><circle cx="512.9" cy="146.6" r="11.8" fill="url(#dH)"/><g><line x1="459.7" y1="166.5" x2="478.5" y2="172.6" stroke="#454545" stroke-width="8.6"/><line x1="459.7" y1="166.5" x2="478.5" y2="172.6" stroke="#656565" stroke-width="7.5"/><line x1="459.7" y1="166.5" x2="478.5" y2="172.6" stroke="#7d7d7d" stroke-width="5.7"/><line x1="459.7" y1="166.5" x2="478.5" y2="172.6" stroke="#999999" stroke-width="2.6"/></g><g><line x1="506.7" y1="185.3" x2="511.3" y2="156.9" stroke="#505050" stroke-width="8.6"/><line x1="506.7" y1="185.3" x2="511.3" y2="156.9" stroke="#747474" stroke-width="7.5"/><line x1="506.7" y1="185.3" x2="511.3" y2="156.9" stroke="#909090" stroke-width="5.7"/><line x1="506.7" y1="185.3" x2="511.3" y2="156.9" stroke="#adadad" stroke-width="2.6"/></g><g><line x1="268.4" y1="217.2" x2="302.9" y2="221.9" stroke="#151540" stroke-width="8.6"/><line x1="268.4" y1="217.2" x2="302.9" y2="221.9" stroke="#1f1f5d" stroke-width="7.5"/><line x1="268.4" y1="217.2" x2="302.9" y2="221.9" stroke="#272773" stroke-width="5.7"/><line x1="268.4" y1="217.2" x2="302.9" y2="221.9" stroke="#43438e" stroke-width="2.6"/></g><g><line x1="329.8" y1="217.0" x2="364.7" y2="198.0" stroke="#151540" stroke-width="8.6"/><line x1="329.8" y1="217.0" x2="364.7" y2="198.0" stroke="#1f1f5d" stroke-width="7.5"/><line x1="329.8" y1="217.0" x2="364.7" y2="198.0" stroke="#272773" stroke-width="5.7"/><line x1="329.8" y1="217.0" x2="364.7" y2="198.0" stroke="#43438e" stroke-width="2.6"/></g><g><line x1="442.6" y1="197.6" x2="445.2" y2="172.8" stroke="#151515" stroke-width="8.6"/><line x1="442.6" y1="197.6" x2="445.2" y2="172.8" stroke="#1f1f1f" stroke-width="7.5"/><line x1="442.6" y1="197.6" x2="445.2" y2="172.8" stroke="#272727" stroke-width="5.7"/><line x1="442.6" y1="197.6" x2="445.2" y2="172.8" stroke="#373737" stroke-width="2.6"/></g><circle cx="398.6" cy="165.2" r="11.9" fill="url(#dH)"/><circle cx="504.4" cy="200.1" r="17.0" fill="url(#dC)"/><g><line x1="310.3" y1="262.7" x2="314.9" y2="236.4" stroke="#0f0f2d" stroke-width="8.7"/><line x1="310.3" y1="262.7" x2="314.9" y2="236.4" stroke="#161641" stroke-width="7.5"/><line x1="310.3" y1="262.7" x2="314.9" y2="236.4" stroke="#1b1b51" stroke-width="5.7"/><line x1="310.3" y1="262.7" x2="314.9" y2="236.4" stroke="#303066" stroke-width="2.6"/></g><g><line x1="315.9" y1="288.6" x2="331.1" y2="313.2" stroke="#505050" stroke-width="8.7"/><line x1="315.9" y1="288.6" x2="331.1" y2="313.2" stroke="#747474" stroke-width="7.5"/><line x1="315.9" y1="288.6" x2="331.1" y2="313.2" stroke="#909090" stroke-width="5.7"/><line x1="315.9" y1="288.6" x2="331.1" y2="313.2" stroke="#adadad" stroke-width="2.6"/></g><g><line x1="392.1" y1="194.9" x2="426.9" y2="204.6" stroke="#2d2d2d" stroke-width="8.7"/><line x1="392.1" y1="194.9" x2="426.9" y2="204.6" stroke="#424242" stroke-width="7.5"/><line x1="392.1" y1="194.9" x2="426.9" y2="204.6" stroke="#525252" stroke-width="5.7"/><line x1="392.1" y1="194.9" x2="426.9" y2="204.6" stroke="#6f6f6f" stroke-width="2.6"/></g><circle cx="317.1" cy="223.8" r="16.3" fill="url(#dN)"/><circle cx="308.0" cy="275.8" r="17.1" fill="url(#dC)"/><circle cx="336.6" cy="322.1" r="11.9" fill="url(#dH)"/><g><line x1="518.1" y1="206.1" x2="567.7" y2="228.0" stroke="#464617" stroke-width="8.7"/><line x1="518.1" y1="206.1" x2="567.7" y2="228.0" stroke="#666622" stroke-width="7.6"/><line x1="518.1" y1="206.1" x2="567.7" y2="228.0" stroke="#7f7f2a" stroke-width="5.7"/><line x1="518.1" y1="206.1" x2="567.7" y2="228.0" stroke="#9b9b49" stroke-width="2.6"/></g><g><line x1="456.4" y1="206.6" x2="489.7" y2="202.1" stroke="#2d2d2d" stroke-width="8.7"/><line x1="456.4" y1="206.6" x2="489.7" y2="202.1" stroke="#424242" stroke-width="7.6"/><line x1="456.4" y1="206.6" x2="489.7" y2="202.1" stroke="#525252" stroke-width="5.7"/><line x1="456.4" y1="206.6" x2="489.7" y2="202.1" stroke="#6f6f6f" stroke-width="2.6"/></g><g><line x1="246.3" y1="286.2" x2="293.2" y2="278.3" stroke="#353535" stroke-width="8.7"/><line x1="246.3" y1="286.2" x2="293.2" y2="278.3" stroke="#4e4e4e" stroke-width="7.6"/><line x1="246.3" y1="286.2" x2="293.2" y2="278.3" stroke="#606060" stroke-width="5.8"/><line x1="246.3" y1="286.2" x2="293.2" y2="278.3" stroke="#808080" stroke-width="2.6"/></g><circle cx="488.1" cy="175.8" r="12.0" fill="url(#dH)"/><circle cx="582.1" cy="234.4" r="18.0" fill="url(#dS)"/><g><line x1="577.8" y1="249.6" x2="566.4" y2="290.0" stroke="#95954a" stroke-width="8.7"/><line x1="577.8" y1="249.6" x2="566.4" y2="290.0" stroke="#d9d96d" stroke-width="7.6"/><line x1="577.8" y1="249.6" x2="566.4" y2="290.0" stroke="#ffff86" stroke-width="5.8"/><line x1="577.8" y1="249.6" x2="566.4" y2="290.0" stroke="#ffffaa" stroke-width="2.6"/></g><circle cx="231.4" cy="288.7" r="17.2" fill="url(#dC)"/><circle cx="441.5" cy="208.7" r="17.2" fill="url(#dC)"/><circle cx="563.5" cy="300.1" r="12.0" fill="url(#dH)"/><g><line x1="440.9" y1="223.8" x2="439.9" y2="252.4" stroke="#505050" stroke-width="8.8"/><line x1="440.9" y1="223.8" x2="439.9" y2="252.4" stroke="#747474" stroke-width="7.6"/><line x1="440.9" y1="223.8" x2="439.9" y2="252.4" stroke="#909090" stroke-width="5.8"/><line x1="440.9" y1="223.8" x2="439.9" y2="252.4" stroke="#adadad" stroke-width="2.6"/></g><circle cx="439.5" cy="263.0" r="12.0" fill="url(#dH)"/><g><line x1="228.1" y1="303.5" x2="222.2" y2="329.7" stroke="#505050" stroke-width="8.8"/><line x1="228.1" y1="303.5" x2="222.2" y2="329.7" stroke="#747474" stroke-width="7.7"/><line x1="228.1" y1="303.5" x2="222.2" y2="329.7" stroke="#909090" stroke-width="5.8"/><line x1="228.1" y1="303.5" x2="222.2" y2="329.7" stroke="#adadad" stroke-width="2.6"/></g><g><line x1="314.9" y1="270.4" x2="324.2" y2="263.1" stroke="#181818" stroke-width="8.8"/><line x1="314.9" y1="270.4" x2="324.2" y2="263.1" stroke="#232323" stroke-width="7.7"/><line x1="314.9" y1="270.4" x2="324.2" y2="263.1" stroke="#2b2b2b" stroke-width="5.8"/><line x1="314.9" y1="270.4" x2="324.2" y2="263.1" stroke="#393939" stroke-width="2.6"/></g><g><line x1="223.4" y1="276.2" x2="212.7" y2="259.6" stroke="#4b4b4b" stroke-width="8.8"/><line x1="223.4" y1="276.2" x2="212.7" y2="259.6" stroke="#6d6d6d" stroke-width="7.7"/><line x1="223.4" y1="276.2" x2="212.7" y2="259.6" stroke="#878787" stroke-width="5.8"/><line x1="223.4" y1="276.2" x2="212.7" y2="259.6" stroke="#a4a4a4" stroke-width="2.6"/></g><circle cx="219.9" cy="340.2" r="12.1" fill="url(#dH)"/><circle cx="207.1" cy="250.7" r="12.2" fill="url(#dH)"/><circle cx="329.1" cy="259.3" r="12.2" fill="url(#dH)"/></svg><span class="vid" style="left:11px;top:11px">ID: 4</span></div></div><div class="dtitle" style="left:1px;top:1024px;width:769px;height:19px"><span class="t" style="left:4px;top:3px"><span style="letter-spacing:0.05px">Object</span><span style="letter-spacing:-0.33px"> </span><span style="letter-spacing:-0.04px">Inspector</span></span><svg class="ic" style="right:27px;top:5px" width="10" height="10" viewBox="0 0 10 10"><path d="M3 1 H8.5 V5.5 H6.5 M3 2 H8.5 M3 1 V3.5" stroke="#1e1e1e" stroke-width="1.1" fill="none"/><rect x="1" y="4" width="5" height="4.5" stroke="#1e1e1e" stroke-width="1.1" fill="none"/><path d="M1 4.6 H6" stroke="#1e1e1e" stroke-width="1.2"/></svg><svg class="ic" style="right:7px;top:6px" width="8" height="8" viewBox="0 0 8 8"><path d="M0.7 0.7 L7.3 7.3 M7.3 0.7 L0.7 7.3" stroke="#1e1e1e" stroke-width="1.6" fill="none"/></svg></div><span class="g" style="left:1px;top:1044px">Molecule</span><i class="hline" style="left:1px;top:1057px;width:768px"></i><div class="tree" style="left:2px;top:1060px;width:766px;height:198px"><div style="position:absolute;left:0;top:0;width:749px;height:198px;overflow:hidden"><span class="t" style="left:3px;top:5px"><span style="letter-spacing:-0.04px">Property</span><span style="letter-spacing:-0.33px"> </span><span style="letter-spacing:-0.25px">Name</span></span><i class="hsep" style="left:122px;height:22px"></i><span class="t" style="left:126px;top:5px"><span style="letter-spacing:-0.30px">Values</span></span><span class="t" style="left:22px;top:25px"><span style="letter-spacing:-0.34px">File</span><span style="letter-spacing:-0.33px"> </span><span style="letter-spacing:-0.17px">Path</span></span><span class="t" style="left:125px;top:25px"><span style="letter-spacing:-0.15px">C:/CONFLEX/Sample_Files/CONFLEX/conformation_search/output/Captopril.sdf</span></span><svg class="ic" style="left:4px;top:45px" width="10" height="7" viewBox="0 0 10 7"><path d="M0.4 0.8 L4.8 5.2 L9.2 0.8" stroke="#3c3c3c" stroke-width="1.5" fill="none"/></svg><span class="t" style="left:22px;top:42px"><span style="letter-spacing:-0.15px">Comment</span></span><span class="t" style="left:125px;top:59px"><span style="letter-spacing:0.02px">Captopril.mol</span></span><span class="t" style="left:125px;top:76px"><span style="letter-spacing:-0.95px">CONFLEX</span><span style="letter-spacing:-0.33px"> </span><span style="letter-spacing:-0.52px">18111917323D</span><span style="letter-spacing:-0.33px"> </span><span style="letter-spacing:-0.67px">1</span><span style="letter-spacing:-0.33px"> </span><span style="letter-spacing:-0.62px">1.00000</span><span style="letter-spacing:-0.33px"> </span><span style="letter-spacing:-0.42px">-1.73761</span><span style="letter-spacing:-0.33px"> </span><span style="letter-spacing:-0.67px">23</span></span><span class="t" style="left:125px;top:93px"><span style="letter-spacing:-1.17px">C1</span><span style="letter-spacing:-0.33px"> </span><span style="letter-spacing:-1.16px">,E</span><span style="letter-spacing:-0.33px"> </span><span style="letter-spacing:0.98px">=</span><span style="letter-spacing:-0.33px"> </span><span style="letter-spacing:-0.33px">-1.738,</span><span style="letter-spacing:-0.33px"> </span><span style="letter-spacing:-1.33px">G</span><span style="letter-spacing:-0.33px"> </span><span style="letter-spacing:0.98px">=</span><span style="letter-spacing:-0.33px"> </span><span style="letter-spacing:-0.57px">0.138E-06,</span><span style="letter-spacing:-0.33px"> </span><span style="letter-spacing:-1.00px">P</span><span style="letter-spacing:-0.33px"> </span><span style="letter-spacing:0.98px">=</span><span style="letter-spacing:-0.33px"> </span><span style="letter-spacing:-0.59px">16.3552,</span><span style="letter-spacing:-0.33px"> </span><span style="letter-spacing:0.50px">M(</span><span style="letter-spacing:-0.33px"> </span><span style="letter-spacing:-0.33px">0),</span><span style="letter-spacing:-0.33px"> </span><span style="letter-spacing:-0.44px">IFN</span><span style="letter-spacing:-0.33px"> </span><span style="letter-spacing:-0.49px">=00000001-00000023</span></span><span class="t" style="left:22px;top:110px"><span style="letter-spacing:0.22px">Num</span><span style="letter-spacing:-0.33px"> </span><span style="letter-spacing:0.00px">Atoms</span></span><span class="t" style="left:125px;top:110px"><span style="letter-spacing:-0.67px">29</span></span><span class="t" style="left:22px;top:127px"><span style="letter-spacing:0.22px">Num</span><span style="letter-spacing:-0.33px"> </span><span style="letter-spacing:-0.20px">Bonds</span></span><span class="t" style="left:125px;top:127px"><span style="letter-spacing:-0.67px">29</span></span><span class="t" style="left:22px;top:144px"><span style="letter-spacing:-0.39px">Radius</span><span style="letter-spacing:-0.33px"> </span><span style="letter-spacing:0.50px">of</span><span style="letter-spacing:-0.33px"> </span><span style="letter-spacing:-0.04px">Gyration</span></span><span class="t" style="left:125px;top:144px"><span style="letter-spacing:-0.61px">3.0195</span></span><svg class="ic" style="left:4px;top:164px" width="10" height="7" viewBox="0 0 10 7"><path d="M0.4 0.8 L4.8 5.2 L9.2 0.8" stroke="#3c3c3c" stroke-width="1.5" fill="none"/></svg><span class="t" style="left:22px;top:161px"><span style="letter-spacing:0.33px">Mol.</span><span style="letter-spacing:-0.33px"> </span><span style="letter-spacing:-0.54px">Shape</span></span><span class="t" style="left:125px;top:178px"><span style="letter-spacing:-0.00px">Length:</span><span style="letter-spacing:-0.33px"> </span><span style="letter-spacing:-0.43px">11.9399A</span></span><span class="t" style="left:125px;top:195px"><span style="letter-spacing:-0.22px">Diameter:</span><span style="letter-spacing:-0.33px"> </span><span style="letter-spacing:-0.53px">7.6441A</span></span></div><div class="vsb" style="left:749px;top:0;width:17px;height:198px"><svg class="ic" style="right:-0.5px;top:0" width="17" height="17" viewBox="0 0 17 17"><path d="M4.8 11 L8.5 7.3 L12.2 11" stroke="#4a4a4a" stroke-width="2" fill="none"/></svg><svg class="ic" style="right:-0.5px;bottom:0" width="17" height="17" viewBox="0 0 17 17"><path d="M4.8 7.4 L8.5 11.1 L12.2 7.4" stroke="#4a4a4a" stroke-width="2" fill="none"/></svg><i class="thumb" style="left:1px;top:17px;width:15px;height:136px"></i></div></div><div class="dtitle" style="left:774px;top:1024px;width:1044px;height:19px"><span class="t" style="left:4px;top:3px"><span style="letter-spacing:-0.45px">Job</span><span style="letter-spacing:-0.33px"> </span><span style="letter-spacing:-0.05px">Manager</span></span><svg class="ic" style="right:27px;top:5px" width="10" height="10" viewBox="0 0 10 10"><path d="M3 1 H8.5 V5.5 H6.5 M3 2 H8.5 M3 1 V3.5" stroke="#1e1e1e" stroke-width="1.1" fill="none"/><rect x="1" y="4" width="5" height="4.5" stroke="#1e1e1e" stroke-width="1.1" fill="none"/><path d="M1 4.6 H6" stroke="#1e1e1e" stroke-width="1.2"/></svg><svg class="ic" style="right:7px;top:6px" width="8" height="8" viewBox="0 0 8 8"><path d="M0.7 0.7 L7.3 7.3 M7.3 0.7 L0.7 7.3" stroke="#1e1e1e" stroke-width="1.6" fill="none"/></svg></div><div class="tree" style="left:774px;top:1045px;width:1042px;height:190px"><span class="t" style="left:5px;top:5px"><span style="letter-spacing:-0.48px">Process</span><span style="letter-spacing:-0.33px"> </span><span style="letter-spacing:-0.50px">ID</span></span><i class="hsep" style="left:63px;height:22px"></i><span class="t" style="left:69px;top:5px"><span style="letter-spacing:-0.15px">Program</span></span><i class="hsep" style="left:117px;height:22px"></i><span class="t" style="left:123px;top:5px"><span style="letter-spacing:-0.45px">Job</span><span style="letter-spacing:-0.33px"> </span><span style="letter-spacing:-0.25px">Type</span></span><i class="hsep" style="left:172px;height:22px"></i><span class="t" style="left:177px;top:5px"><span style="letter-spacing:0.12px">Molecule</span></span><i class="hsep" style="left:230px;height:22px"></i><span class="t" style="left:234px;top:5px"><span style="letter-spacing:-0.40px">State</span></span><i class="hsep" style="left:265px;height:22px"></i><span class="t" style="left:270px;top:5px"><span style="letter-spacing:-0.27px">Start</span><span style="letter-spacing:-0.33px"> </span><span style="letter-spacing:-0.31px">Time</span></span><i class="hsep" style="left:327px;height:22px"></i><span class="t" style="left:332px;top:5px"><span style="letter-spacing:-0.15px">Remaining</span><span style="letter-spacing:-0.33px"> </span><span style="letter-spacing:-0.40px">Cycle</span></span><i class="hsep" style="left:423px;height:22px"></i><span class="t" style="left:430px;top:5px"><span style="letter-spacing:-0.26px">Estimated</span><span style="letter-spacing:-0.33px"> </span><span style="letter-spacing:-0.15px">Remaining</span><span style="letter-spacing:-0.33px"> </span><span style="letter-spacing:-0.31px">Time</span></span><i class="hsep" style="left:573px;height:22px"></i><span class="t" style="left:781px;top:5px"><span style="letter-spacing:-0.19px">Command</span></span></div><span class="g" style="left:778px;top:1242px">Server :</span><div class="combo" style="left:818px;top:1238px;width:74px;height:20px"><span class="g" style="left:4px;top:2px">Localhost</span><svg class="ic" style="right:5px;top:6px" width="9" height="6" viewBox="0 0 9 6"><path d="M0.5 0.7 L4.5 4.7 L8.5 0.7" stroke="#404040" stroke-width="1.1" fill="none"/></svg></div><div class="btn" style="left:894px;top:1238px;width:73px;height:21px"><span class="g c" style="left:0;width:71px;top:3px">Refresh</span></div><div class="btn dis" style="left:1317px;top:1238px;width:73px;height:21px"><span class="g c" style="left:0;width:71px;top:3px">Open Result</span></div><div class="btn dis" style="left:1739px;top:1238px;width:73px;height:21px"><span class="g c" style="left:0;width:71px;top:3px">Delete</span></div><span class="t" style="left:3px;top:1264px"><span style="letter-spacing:-0.25px">Started.</span></span><i class="vsep" style="left:44px;top:1263px;height:16px;background:#c8c8c8"></i><svg class="ic" style="left:1806px;top:1268px" width="10" height="10" viewBox="0 0 10 10"><rect x="7" y="1" width="2" height="2" fill="#b8b8b8"/><rect x="4" y="4" width="2" height="2" fill="#b8b8b8"/><rect x="7" y="4" width="2" height="2" fill="#b8b8b8"/><rect x="1" y="7" width="2" height="2" fill="#b8b8b8"/><rect x="4" y="7" width="2" height="2" fill="#b8b8b8"/><rect x="7" y="7" width="2" height="2" fill="#b8b8b8"/></svg><i style="left:1817px;top:52px;width:1px;height:86px;background:#fff"></i><i style="left:1817px;top:1019px;width:1px;height:261px;background:#fff"></i><i style="left:1px;top:1279px;width:1817px;height:1px;background:#fff"></i><i class="wb" style="left:0;top:0;width:1819px;height:1px"></i><i class="wb" style="left:0;top:0;width:1px;height:1281px"></i><i class="wb" style="left:1818px;top:0;width:1px;height:1281px"></i><i class="wb" style="left:0;top:1280px;width:1819px;height:1px"></i></div></body></html>
